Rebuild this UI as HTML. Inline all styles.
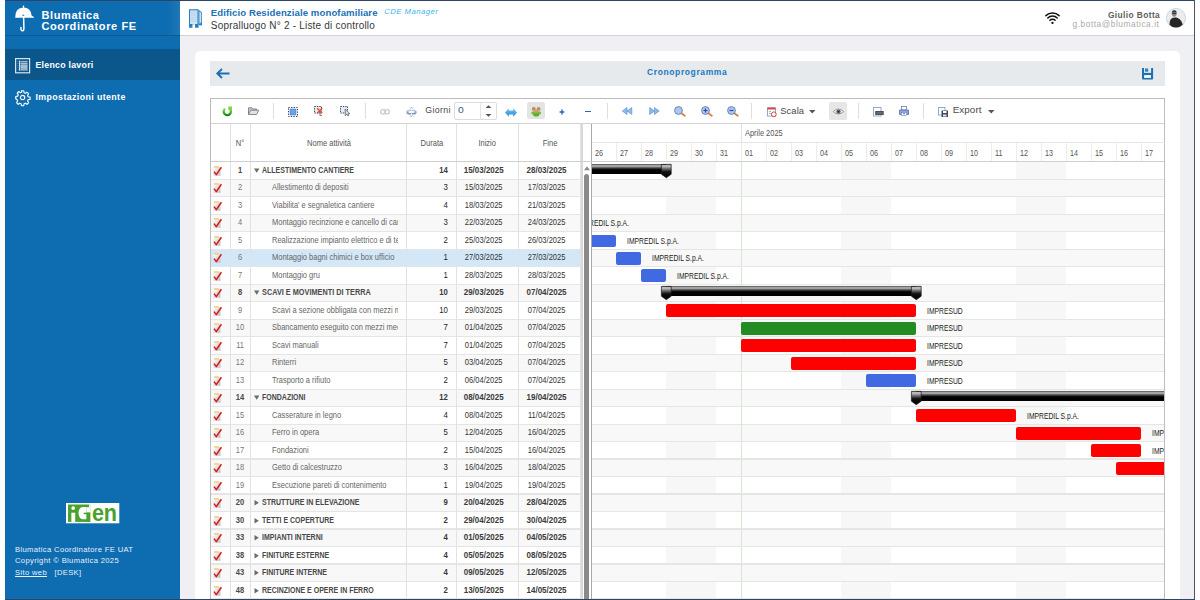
<!DOCTYPE html><html><head><meta charset="utf-8"><style>
*{margin:0;padding:0;box-sizing:border-box}
html,body{width:1200px;height:600px;overflow:hidden;background:#fff;font-family:"Liberation Sans",sans-serif}
.a{position:absolute}
.t{position:absolute;white-space:nowrap;line-height:1}
svg{position:absolute;overflow:visible}
</style></head><body>
<div class="a" style="left:5px;top:0;width:175px;height:600px;background:#0e6db1"></div><div class="a" style="left:168px;top:1px;width:12px;height:34px;background:linear-gradient(90deg,rgba(255,255,255,0),rgba(255,255,255,0.07))"></div>
<div class="a" style="left:5px;top:35px;width:175px;height:1px;background:#0d5b96"></div>
<div class="a" style="left:5px;top:49px;width:175px;height:31px;background:#0b578c"></div>
<svg style="left:14px;top:5px" width="21" height="27" viewBox="0 0 21 27">
<path d="M9.5 0.6 L9.5 3" stroke="#fff" stroke-width="1.3"/>
<path d="M1.2 12.6 Q1.2 2.6 9.5 2.6 Q16.6 2.6 17.6 10.4 L20.2 12.2 Q20.2 12.8 19.5 12.8 L1.2 12.8 Z" fill="#fff"/>
<ellipse cx="9.3" cy="10.3" rx="1.1" ry="0.8" fill="#3f86c0"/>
<path d="M9.6 12.5 L9.9 22.8 Q10 25.8 8.4 25.8 Q6.8 25.8 6.9 22.6" stroke="#fff" stroke-width="1.5" fill="none" stroke-linecap="round"/>
</svg>
<div class="t" style="left:41.5px;top:10.2px;font-size:11px;font-weight:bold;color:#fff;letter-spacing:0.6px">Blumatica</div>
<div class="t" style="left:41.5px;top:21.1px;font-size:11px;font-weight:bold;color:#fff;letter-spacing:0.6px">Coordinatore FE</div>
<svg style="left:14.9px;top:58.3px" width="15.2" height="15.4" viewBox="0 0 15.2 15.4">
<rect x="0.6" y="0.6" width="14" height="14.2" fill="none" stroke="#d6e3ee" stroke-width="1.2"/>
<path d="M4.5 2.6V12.8" stroke="#e8f0f6" stroke-width="0.9"/>
<path d="M3 3V12.5" stroke="#a9c0d4" stroke-width="0.7" stroke-dasharray="0.8 1.2"/>
<rect x="5.4" y="2.9" width="7.2" height="0.9" fill="#c0d2e2"/>
<rect x="5.4" y="4.7" width="7.2" height="1" fill="#f0f5fa"/>
<rect x="5.4" y="6.3" width="7.2" height="4.6" fill="#a6bdd1"/>
<rect x="5.4" y="11.4" width="7.2" height="1" fill="#f0f5fa"/>
</svg>
<div class="t" style="left:35.5px;top:61.3px;font-size:8.8px;font-weight:bold;color:#fff;letter-spacing:0.25px">Elenco lavori</div>
<svg style="left:15px;top:90.2px" width="15.2" height="15.2" viewBox="0 0 16 16">
<path d="M6.8 0.8h2.4l0.4 2.1 1.3 0.6 1.8-1.2 1.7 1.7-1.2 1.8 0.6 1.3 2.1 0.4v2.4l-2.1 0.4-0.6 1.3 1.2 1.8-1.7 1.7-1.8-1.2-1.3 0.6-0.4 2.1H6.8l-0.4-2.1-1.3-0.6-1.8 1.2-1.7-1.7 1.2-1.8-0.6-1.3L0.8 9.2V6.8l2.1-0.4 0.6-1.3-1.2-1.8 1.7-1.7 1.8 1.2 1.3-0.6z" fill="none" stroke="#fff" stroke-width="1.2" stroke-linejoin="round"/>
<circle cx="8" cy="8" r="2.3" fill="none" stroke="#fff" stroke-width="1.2"/>
</svg>
<div class="t" style="left:35.5px;top:92.5px;font-size:8.8px;font-weight:bold;color:#fff;letter-spacing:0.4px">Impostazioni utente</div>
<svg style="left:65.7px;top:502.9px" width="53.3" height="20.3" viewBox="0 0 53.3 20.3">
<rect x="0" y="0" width="53.3" height="20.3" fill="#fff"/>
<rect x="2.05" y="1.5" width="22.15" height="17.4" fill="#4ba12d"/>
<rect x="23.1" y="1.4" width="1.2" height="2.8" fill="#fff"/>
<rect x="20.6" y="4.2" width="3.7" height="5.5" fill="#fff"/>
<path d="M20.6 3.9H16.5A4 6.2 0 0 0 16.5 16.3H20.6Z" fill="#fff"/>
<rect x="17.6" y="9.7" width="6.6" height="1.5" fill="#4ba12d"/>
<rect x="20.6" y="9.7" width="3.6" height="9.2" fill="#4ba12d"/>
<circle cx="7.2" cy="5.15" r="1.8" fill="#fff"/>
<rect x="5.35" y="9.7" width="3.85" height="9.2" fill="#fff"/>
</svg>
<div class="t" style="left:91.6px;top:500.6px;font-size:24px;font-weight:bold;color:#4ba12d;transform:scaleX(0.9);transform-origin:0 0;letter-spacing:-0.3px">en</div>
<div class="t" style="left:15px;top:546.1px;font-size:7.6px;color:#e8f0f8;letter-spacing:0.36px">Blumatica Coordinatore FE UAT</div>
<div class="t" style="left:15px;top:557.3px;font-size:7.6px;color:#e8f0f8;letter-spacing:0.36px">Copyright © Blumatica 2025</div>
<div class="t" style="left:15px;top:568.7px;font-size:7.6px;color:#e8f0f8;letter-spacing:0.36px"><span style="text-decoration:underline">Sito web</span>&nbsp;&nbsp; [DESK]</div>
<div class="a" style="left:180px;top:0;width:1014px;height:35px;background:#fff"></div>
<div class="a" style="left:180px;top:35px;width:1014px;height:1px;background:#d2d2d6"></div>
<div class="a" style="left:180px;top:36px;width:1014px;height:564px;background:#efeff4"></div>
<svg style="left:189px;top:9px" width="13" height="19" viewBox="0 0 13 19">
<path d="M0 0.2H9.6V18.7H6V15.2H3.5V18.7H0Z" fill="#2a7fc1"/>
<rect x="1.1" y="1.4" width="7.3" height="13.6" fill="#e3eff8"/>
<path d="M1.1 3.2H8.4M1.1 5H8.4M1.1 6.8H8.4M1.1 8.6H8.4M1.1 10.4H8.4M1.1 12.2H8.4M3.1 1.4V15M5.1 1.4V15M7 1.4V15" stroke="#9cc4e4" stroke-width="0.5"/>
<path d="M9.6 0.8L12.8 3.2V16.2H9.6Z" fill="#2a7fc1"/>
<path d="M10.4 2.4L12 3.7V14.5H10.4Z" fill="#cfe3f3"/>
<rect x="11.4" y="13.6" width="1.6" height="2.6" fill="#2a7fc1"/>
</svg>
<div class="t" style="left:210.8px;top:8px;font-size:9.6px;font-weight:bold;color:#2171b5;letter-spacing:0.09px">Edificio Residenziale monofamiliare</div>
<div class="t" style="left:384.2px;top:7.8px;font-size:7.7px;font-style:italic;color:#3bb4ea;letter-spacing:0.5px">CDE Manager</div>
<div class="t" style="left:210.8px;top:21.4px;font-size:10px;color:#383838;letter-spacing:0.2px">Sopralluogo N° 2 - Liste di controllo</div>
<svg style="left:1044.9px;top:11.4px" width="15" height="13" viewBox="0 0 15 13">
<path d="M0.9 4.6A9.4 9.4 0 0 1 14.1 4.6" stroke="#111" stroke-width="1.5" fill="none" stroke-linecap="round"/>
<path d="M2.8 7A6.4 6.4 0 0 1 12.2 7" stroke="#111" stroke-width="1.5" fill="none" stroke-linecap="round"/>
<path d="M4.9 9.3A3.5 3.5 0 0 1 10.1 9.3" stroke="#111" stroke-width="1.5" fill="none" stroke-linecap="round"/>
<circle cx="7.5" cy="11.9" r="1.15" fill="#111"/>
</svg>
<div class="t" style="left:1107.9px;top:11.3px;font-size:8.4px;font-weight:bold;color:#5e5e5e;letter-spacing:0.4px">Giulio Botta</div>
<div class="t" style="left:1072.5px;top:20.3px;font-size:8.4px;color:#ababab;letter-spacing:0.52px">g.botta@blumatica.it</div>
<svg style="left:1166.1px;top:8.2px" width="20" height="20" viewBox="0 0 20 20">
<defs><clipPath id="cc"><circle cx="10" cy="10" r="9.4"/></clipPath></defs>
<circle cx="10" cy="10" r="9.6" fill="#ececec" stroke="#b5cfe3" stroke-width="0.7"/>
<g clip-path="url(#cc)">
<path d="M3.3 20 L3.8 13.5 Q4.5 10.3 8.2 9.6 L10.5 9.6 Q14 10.5 15.5 13.5 L17.5 18.5 L17 20Z" fill="#262626"/>
<path d="M2 20 Q10 22 18.5 17.5 L18.5 21 L2 21Z" fill="#1a4a80"/>
<ellipse cx="8.2" cy="5.6" rx="2.5" ry="3.1" fill="#8a8a8a"/>
<path d="M5.8 4.6 Q6 2.2 8.2 2.3 Q10.6 2.3 10.7 4.6 L10.2 4.2 L6.3 4.2Z" fill="#3a3a3a"/>
<rect x="6.3" y="4.9" width="3.9" height="1" fill="#2a2a2a"/>
</g>
</svg>
<div class="a" style="left:195px;top:51px;width:985px;height:560px;background:#fff;border-radius:5px"></div>
<div class="a" style="left:210px;top:61px;width:955px;height:24.5px;background:#e6eaed"></div>
<svg style="left:215.5px;top:67.5px" width="14" height="11" viewBox="0 0 14 11">
<path d="M13.5 5.5H1.8M6 1L1.3 5.5 6 10" stroke="#1f6fb2" stroke-width="1.9" fill="none" stroke-linejoin="miter"/>
</svg>
<div class="t" style="left:647.1px;top:67.8px;font-size:8.5px;font-weight:bold;color:#2078c0;letter-spacing:0.6px">Cronoprogramma</div>
<svg style="left:1141.9px;top:68.1px" width="11.1" height="11.6" viewBox="0 0 11.1 11.6">
<path d="M0 0H11.1V10.8Q11.1 11.6 10.3 11.6H0.8Q0 11.6 0 10.8Z" fill="#1f6fb2"/>
<rect x="2" y="0" width="7.1" height="4.9" fill="#e6eaed"/><rect x="3" y="0.5" width="3.2" height="3.2" fill="#2f7fc0"/>
<rect x="2.1" y="7.1" width="6.9" height="2.8" fill="#fff"/>
</svg>
<div class="a" style="left:210px;top:98.3px;width:955px;height:501.7px;background:#fff;border:1.4px solid #bcbcbc;border-bottom:none"></div>
<div class="a" style="left:211px;top:122.6px;width:953px;height:1.5px;background:#d2d2d2"></div>
<div class="a" style="left:272.8px;top:103px;width:1px;height:16px;background:#dedede"></div>
<div class="a" style="left:364.5px;top:103px;width:1px;height:16px;background:#dedede"></div>
<div class="a" style="left:607.0px;top:103px;width:1px;height:16px;background:#dedede"></div>
<div class="a" style="left:751.2px;top:103px;width:1px;height:16px;background:#dedede"></div>
<div class="a" style="left:857.8px;top:103px;width:1px;height:16px;background:#dedede"></div>
<div class="a" style="left:923.0px;top:103px;width:1px;height:16px;background:#dedede"></div>
<svg style="left:222px;top:105.5px" width="11" height="11" viewBox="0 0 11 11">
<defs><linearGradient id="gg" x1="0" y1="0" x2="0" y2="1"><stop offset="0" stop-color="#8fe060"/><stop offset="1" stop-color="#108a10"/></linearGradient></defs>
<path d="M3.2 2.6 A3.6 3.6 0 1 0 7.6 2.8" stroke="url(#gg)" stroke-width="2.3" fill="none"/>
<path d="M6.2 0.5H10V4.3L8.9 4.1H6.4Z" fill="#7ad84e"/>
</svg>
<svg style="left:248px;top:106.5px" width="11" height="8" viewBox="0 0 11 8">
<path d="M0.5 7.5V0.8H4L5 2H8.5V3.2" fill="#c9ccd2" stroke="#6e7278" stroke-width="0.8"/>
<path d="M0.5 7.5L2.6 3.2H10.7L8.6 7.5Z" fill="#dfe2e8" stroke="#6e7278" stroke-width="0.8"/>
</svg>
<svg style="left:288px;top:106.5px" width="10" height="10" viewBox="0 0 10 10">
<rect x="0.5" y="0.5" width="9" height="9" fill="none" stroke="#3b3f4a" stroke-width="1" stroke-dasharray="1.3 1.3"/>
<rect x="2" y="2" width="6" height="6" fill="#6aa3e8" stroke="#3f7fd0" stroke-width="0.6"/>
</svg>
<svg style="left:314px;top:106px" width="10" height="10" viewBox="0 0 10 10">
<rect x="0.5" y="0.5" width="7" height="6.5" fill="#e6ebf5" stroke="#3b3f4a" stroke-width="1" stroke-dasharray="1.3 1.1"/>
<path d="M3.2 2.2L8.2 7.2M8.2 2.2L3.2 7.2" stroke="#e05030" stroke-width="1.5"/>
<path d="M6 6L6 9.8 7 9 8 10" stroke="#555" stroke-width="0.7" fill="none"/>
</svg>
<svg style="left:340px;top:106px" width="11" height="10" viewBox="0 0 11 10">
<rect x="0.5" y="0.5" width="7" height="6.5" fill="#e6ebf5" stroke="#3b3f4a" stroke-width="1" stroke-dasharray="1.3 1.1"/>
<path d="M5.2 3L5.2 9.6 6.8 8.2 8 10 8.8 9.6 7.8 7.8 9.8 7.6Z" fill="#d8e6f0" stroke="#4a4f58" stroke-width="0.7"/>
</svg>
<svg style="left:380px;top:108.5px" width="10" height="5.5" viewBox="0 0 10 5.5">
<ellipse cx="3" cy="2.75" rx="2.5" ry="2.2" fill="none" stroke="#c6cfdc" stroke-width="1.3"/>
<ellipse cx="7" cy="2.75" rx="2.5" ry="2.2" fill="none" stroke="#c6cfdc" stroke-width="1.3"/>
</svg>
<svg style="left:406px;top:106.5px" width="11" height="10" viewBox="0 0 11 10">
<defs><linearGradient id="ul" x1="0" y1="0" x2="0" y2="1"><stop offset="0" stop-color="#c8d6ea"/><stop offset="1" stop-color="#6f87b0"/></linearGradient></defs>
<path d="M4.8 2.4 Q0.3 2.2 0.3 5 Q0.3 7.8 4.8 7.6 L5.6 5.8 Q2.4 6.4 2.4 5 Q2.4 3.6 5.6 4.2Z" fill="url(#ul)"/>
<path d="M6.2 2.4 Q10.7 2.2 10.7 5 Q10.7 7.8 6.2 7.6 L5.4 5.8 Q8.6 6.4 8.6 5 Q8.6 3.6 5.4 4.2Z" fill="url(#ul)"/>
<path d="M3.8 0.3L4.6 1.6M7.2 0.3L6.4 1.6M5.5 0V1.4M3.8 9.7L4.6 8.4M7.2 9.7L6.4 8.4M5.5 10V8.6" stroke="#7f95b8" stroke-width="0.6"/>
</svg>
<div class="t" style="left:425.2px;top:105.6px;font-size:8.8px;color:#4a4a4a;letter-spacing:0.37px">Giorni</div>
<div class="a" style="left:454.4px;top:101.5px;width:43px;height:18.5px;border:1px solid #dcdcdc;border-radius:2px;background:#fff"></div>
<div class="a" style="left:479.6px;top:102px;width:1px;height:17.5px;background:#e4e4e4"></div>
<div class="t" style="left:458.3px;top:106.2px;font-size:8.6px;color:#3d5a8a;transform:scaleX(1.2);transform-origin:0 0">0</div>
<svg style="left:485px;top:105px" width="7" height="12" viewBox="0 0 7 12">
<path d="M0.5 3L3.5 0.3 6.5 3Z M0.5 9L3.5 11.7 6.5 9Z" fill="#555"/></svg>
<svg style="left:505px;top:107.5px" width="12" height="9" viewBox="0 0 12 9">
<defs><linearGradient id="bg2" x1="0" y1="0" x2="0" y2="1"><stop offset="0" stop-color="#7ec8f5"/><stop offset="1" stop-color="#1f86d6"/></linearGradient></defs>
<path d="M0 4.5L3.8 0.3V2.6H8.2V0.3L12 4.5 8.2 8.7V6.4H3.8V8.7Z" fill="url(#bg2)"/></svg>
<div class="a" style="left:527px;top:102.2px;width:17.7px;height:17.3px;background:#e4e4e4;border-radius:2px"></div>
<svg style="left:530.5px;top:106.5px" width="11" height="10" viewBox="0 0 11 10">
<ellipse cx="2.7" cy="5.9" rx="2.5" ry="1.6" fill="#74c03c"/><ellipse cx="7.7" cy="5.9" rx="2.5" ry="1.6" fill="#74c03c"/>
<circle cx="2.8" cy="1.9" r="1.9" fill="#c48a58"/><circle cx="7.6" cy="1.9" r="1.9" fill="#c48a58"/>
<ellipse cx="5.2" cy="7.8" rx="3.1" ry="1.8" fill="#5fae2e"/>
<circle cx="5.2" cy="4.3" r="1.8" fill="#d49a68"/>
</svg>
<svg style="left:559px;top:109px" width="6" height="6" viewBox="0 0 6 6">
<path d="M3 0.6V5.4M0.6 3H5.4" stroke="#2f5fc8" stroke-width="1.4"/></svg>
<div class="a" style="left:585.3px;top:110.7px;width:6px;height:1.6px;background:#2f5fc8"></div>
<svg style="left:622px;top:107px" width="10.5" height="8" viewBox="0 0 10.5 8">
<path d="M0.3 4L5 0.5V7.5Z M5 4L9.8 0.5V7.5Z" fill="#8dbbea" stroke="#4f8ad4" stroke-width="0.6"/></svg>
<svg style="left:648.5px;top:107px" width="10.5" height="8" viewBox="0 0 10.5 8">
<path d="M10.2 4L5.5 0.5V7.5Z M5.5 4L0.7 0.5V7.5Z" fill="#8dbbea" stroke="#4f8ad4" stroke-width="0.6"/></svg>
<svg style="left:674px;top:105.8px" width="12" height="10" viewBox="0 0 12 10">
<path d="M7 7L10.8 9.8" stroke="#d9813d" stroke-width="1.8" stroke-linecap="round"/>
<circle cx="4.5" cy="4.5" r="3.9" fill="#a9c7ef" stroke="#6c87b5" stroke-width="1"/></svg>
<svg style="left:701px;top:105.8px" width="12" height="10" viewBox="0 0 12 10">
<path d="M7 7L10.8 9.8" stroke="#d9813d" stroke-width="1.8" stroke-linecap="round"/>
<circle cx="4.5" cy="4.5" r="3.9" fill="#a9c7ef" stroke="#6c87b5" stroke-width="1"/><path d="M4.5 2.5V6.5M2.5 4.5H6.5" stroke="#2a4f9a" stroke-width="1.2"/></svg>
<svg style="left:727px;top:105.8px" width="12" height="10" viewBox="0 0 12 10">
<path d="M7 7L10.8 9.8" stroke="#d9813d" stroke-width="1.8" stroke-linecap="round"/>
<circle cx="4.5" cy="4.5" r="3.9" fill="#a9c7ef" stroke="#6c87b5" stroke-width="1"/><path d="M2.5 4.5H6.5" stroke="#2a4f9a" stroke-width="1.2"/></svg>
<svg style="left:766.5px;top:106.5px" width="10" height="10" viewBox="0 0 10 10">
<rect x="0.5" y="1" width="8" height="8" fill="#fff" stroke="#7aa0d8" stroke-width="0.9"/>
<rect x="0.5" y="0.5" width="8" height="2" fill="#d44a3a"/>
<circle cx="6.8" cy="7.3" r="2.4" fill="#fff" stroke="#c33" stroke-width="0.9"/>
<path d="M2 4.5H4M2 6.5H4" stroke="#7aa0d8" stroke-width="0.8"/></svg>
<div class="t" style="left:780.2px;top:105.9px;font-size:9.4px;color:#4a4a4a;letter-spacing:0.1px">Scala</div>
<svg style="left:809px;top:110px" width="6.5" height="4" viewBox="0 0 6.5 4"><path d="M0 0H6.5L3.25 3.6Z" fill="#555"/></svg>
<div class="a" style="left:829.2px;top:102px;width:18.3px;height:18px;background:#e6e6e6;border-radius:2px"></div>
<svg style="left:833px;top:107.5px" width="11" height="7" viewBox="0 0 11 7">
<path d="M0.3 3.5Q5.5 -1.5 10.7 3.5Q5.5 8.5 0.3 3.5Z" fill="#eef2f8" stroke="#b08050" stroke-width="0.8"/>
<circle cx="5.5" cy="3.6" r="2.2" fill="#4a6aa0"/><circle cx="5.5" cy="3.6" r="0.9" fill="#1a2a50"/></svg>
<svg style="left:873px;top:106.5px" width="11" height="9.5" viewBox="0 0 11 9.5">
<rect x="0.5" y="0.5" width="7.5" height="8.5" fill="#fff" stroke="#8aa0d0" stroke-width="0.9"/>
<rect x="2.2" y="4" width="8.5" height="4" fill="#4a4f58"/><path d="M3.5 6H9.5" stroke="#aaa" stroke-width="0.6"/></svg>
<svg style="left:899px;top:106px" width="10" height="10" viewBox="0 0 10 10">
<rect x="2.5" y="0.5" width="5" height="3.5" fill="#fff" stroke="#6a80b0" stroke-width="0.8"/>
<path d="M0.5 4H9.5V8.5H0.5Z" fill="#8aa4d8" stroke="#5a70a0" stroke-width="0.8"/>
<rect x="2.5" y="6.5" width="5" height="3" fill="#fff" stroke="#6a80b0" stroke-width="0.6"/>
<rect x="4" y="7.2" width="2" height="1" fill="#2a8ae0"/></svg>
<svg style="left:937.5px;top:106.5px" width="11" height="10" viewBox="0 0 11 10">
<rect x="0.5" y="0.5" width="6.5" height="7.5" fill="#fff" stroke="#8aa0d0" stroke-width="0.9"/>
<rect x="3.5" y="3.5" width="6.5" height="6.5" fill="#3f4a5e"/><rect x="5" y="4" width="3.5" height="2" fill="#fff"/><rect x="5" y="7.5" width="3.5" height="2" fill="#dfe6f0"/></svg>
<div class="t" style="left:952.7px;top:105.2px;font-size:9.8px;color:#4a4a4a;letter-spacing:0.1px">Export</div>
<svg style="left:987.5px;top:110px" width="6.5" height="4" viewBox="0 0 6.5 4"><path d="M0 0H6.5L3.25 3.6Z" fill="#555"/></svg>
<div class="a" style="left:211px;top:161px;width:953px;height:1.3px;background:#cfcfcf"></div>
<div class="t" style="left:230.4px;width:20.099999999999994px;top:139.5px;text-align:center;font-size:8.2px;color:#555;transform:scaleX(0.92);transform-origin:50% 0">N°</div>
<div class="t" style="left:250.5px;width:156.0px;top:139.5px;text-align:center;font-size:8.2px;color:#555;transform:scaleX(0.92);transform-origin:50% 0">Nome attività</div>
<div class="t" style="left:406.5px;width:49.80000000000001px;top:139.5px;text-align:center;font-size:8.2px;color:#555;transform:scaleX(0.92);transform-origin:50% 0">Durata</div>
<div class="t" style="left:456.3px;width:62.400000000000034px;top:139.5px;text-align:center;font-size:8.2px;color:#555;transform:scaleX(0.92);transform-origin:50% 0">Inizio</div>
<div class="t" style="left:518.7px;width:62.09999999999991px;top:139.5px;text-align:center;font-size:8.2px;color:#555;transform:scaleX(0.92);transform-origin:50% 0">Fine</div>
<div class="a" style="left:591.8px;top:142px;width:572.9000000000001px;height:1px;background:#e6e6e6"></div>
<div class="a" style="left:741.3px;top:123.5px;width:1px;height:38px;background:#e2e2e2"></div>
<div class="t" style="left:745.0999999999999px;top:130.2px;font-size:8.2px;color:#555;transform:scaleX(0.91);transform-origin:0 0">Aprile 2025</div>
<div class="t" style="left:595.3px;top:149.5px;font-size:8.2px;color:#555;transform:scaleX(0.88);transform-origin:0 0">26</div>
<div class="a" style="left:616.3px;top:142.5px;width:1px;height:19px;background:#ececec"></div>
<div class="t" style="left:620.3px;top:149.5px;font-size:8.2px;color:#555;transform:scaleX(0.88);transform-origin:0 0">27</div>
<div class="a" style="left:641.3px;top:142.5px;width:1px;height:19px;background:#ececec"></div>
<div class="t" style="left:645.3px;top:149.5px;font-size:8.2px;color:#555;transform:scaleX(0.88);transform-origin:0 0">28</div>
<div class="a" style="left:666.3px;top:142.5px;width:1px;height:19px;background:#ececec"></div>
<div class="t" style="left:670.3px;top:149.5px;font-size:8.2px;color:#555;transform:scaleX(0.88);transform-origin:0 0">29</div>
<div class="a" style="left:691.3px;top:142.5px;width:1px;height:19px;background:#ececec"></div>
<div class="t" style="left:695.3px;top:149.5px;font-size:8.2px;color:#555;transform:scaleX(0.88);transform-origin:0 0">30</div>
<div class="a" style="left:716.3px;top:142.5px;width:1px;height:19px;background:#ececec"></div>
<div class="t" style="left:720.3px;top:149.5px;font-size:8.2px;color:#555;transform:scaleX(0.88);transform-origin:0 0">31</div>
<div class="a" style="left:741.3px;top:142.5px;width:1px;height:19px;background:#ececec"></div>
<div class="t" style="left:745.3px;top:149.5px;font-size:8.2px;color:#555;transform:scaleX(0.88);transform-origin:0 0">01</div>
<div class="a" style="left:766.3px;top:142.5px;width:1px;height:19px;background:#ececec"></div>
<div class="t" style="left:770.3px;top:149.5px;font-size:8.2px;color:#555;transform:scaleX(0.88);transform-origin:0 0">02</div>
<div class="a" style="left:791.3px;top:142.5px;width:1px;height:19px;background:#ececec"></div>
<div class="t" style="left:795.3px;top:149.5px;font-size:8.2px;color:#555;transform:scaleX(0.88);transform-origin:0 0">03</div>
<div class="a" style="left:816.3px;top:142.5px;width:1px;height:19px;background:#ececec"></div>
<div class="t" style="left:820.3px;top:149.5px;font-size:8.2px;color:#555;transform:scaleX(0.88);transform-origin:0 0">04</div>
<div class="a" style="left:841.3px;top:142.5px;width:1px;height:19px;background:#ececec"></div>
<div class="t" style="left:845.3px;top:149.5px;font-size:8.2px;color:#555;transform:scaleX(0.88);transform-origin:0 0">05</div>
<div class="a" style="left:866.3px;top:142.5px;width:1px;height:19px;background:#ececec"></div>
<div class="t" style="left:870.3px;top:149.5px;font-size:8.2px;color:#555;transform:scaleX(0.88);transform-origin:0 0">06</div>
<div class="a" style="left:891.3px;top:142.5px;width:1px;height:19px;background:#ececec"></div>
<div class="t" style="left:895.3px;top:149.5px;font-size:8.2px;color:#555;transform:scaleX(0.88);transform-origin:0 0">07</div>
<div class="a" style="left:916.3px;top:142.5px;width:1px;height:19px;background:#ececec"></div>
<div class="t" style="left:920.3px;top:149.5px;font-size:8.2px;color:#555;transform:scaleX(0.88);transform-origin:0 0">08</div>
<div class="a" style="left:941.3px;top:142.5px;width:1px;height:19px;background:#ececec"></div>
<div class="t" style="left:945.3px;top:149.5px;font-size:8.2px;color:#555;transform:scaleX(0.88);transform-origin:0 0">09</div>
<div class="a" style="left:966.3px;top:142.5px;width:1px;height:19px;background:#ececec"></div>
<div class="t" style="left:970.3px;top:149.5px;font-size:8.2px;color:#555;transform:scaleX(0.88);transform-origin:0 0">10</div>
<div class="a" style="left:991.3px;top:142.5px;width:1px;height:19px;background:#ececec"></div>
<div class="t" style="left:995.3px;top:149.5px;font-size:8.2px;color:#555;transform:scaleX(0.88);transform-origin:0 0">11</div>
<div class="a" style="left:1016.3px;top:142.5px;width:1px;height:19px;background:#ececec"></div>
<div class="t" style="left:1020.3px;top:149.5px;font-size:8.2px;color:#555;transform:scaleX(0.88);transform-origin:0 0">12</div>
<div class="a" style="left:1041.3px;top:142.5px;width:1px;height:19px;background:#ececec"></div>
<div class="t" style="left:1045.3px;top:149.5px;font-size:8.2px;color:#555;transform:scaleX(0.88);transform-origin:0 0">13</div>
<div class="a" style="left:1066.3px;top:142.5px;width:1px;height:19px;background:#ececec"></div>
<div class="t" style="left:1070.3px;top:149.5px;font-size:8.2px;color:#555;transform:scaleX(0.88);transform-origin:0 0">14</div>
<div class="a" style="left:1091.3px;top:142.5px;width:1px;height:19px;background:#ececec"></div>
<div class="t" style="left:1095.3px;top:149.5px;font-size:8.2px;color:#555;transform:scaleX(0.88);transform-origin:0 0">15</div>
<div class="a" style="left:1116.3px;top:142.5px;width:1px;height:19px;background:#ececec"></div>
<div class="t" style="left:1120.3px;top:149.5px;font-size:8.2px;color:#555;transform:scaleX(0.88);transform-origin:0 0">16</div>
<div class="a" style="left:1141.3px;top:142.5px;width:1px;height:19px;background:#ececec"></div>
<div class="t" style="left:1145.3px;top:149.5px;font-size:8.2px;color:#555;transform:scaleX(0.88);transform-origin:0 0">17</div>
<div class="a" style="left:211px;top:162.35px;width:369.8px;height:16.89px;background:#fff"></div>
<div class="a" style="left:592.0999999999999px;top:162.35px;width:572.10px;height:16.89px;background:#fff"></div>
<div class="a" style="left:666.3px;top:162.35px;width:50.0px;height:16.89px;background:#f7f7f7"></div>
<div class="a" style="left:841.3px;top:162.35px;width:50.0px;height:16.89px;background:#f7f7f7"></div>
<div class="a" style="left:1016.3px;top:162.35px;width:50.0px;height:16.89px;background:#f7f7f7"></div>
<div class="a" style="left:741.3px;top:161.75px;width:1px;height:17.49px;background:#d5e8d5"></div>
<div class="a" style="left:211px;top:178.64px;width:369.8px;height:1.2px;background:#e5e5e5"></div>
<div class="a" style="left:592.0999999999999px;top:178.64px;width:572.10px;height:1.2px;background:#e5e5e5"></div>
<svg style="left:213px;top:165.95px" width="9" height="10" viewBox="0 0 9 10">
<defs><linearGradient id="pp0" x1="0" y1="0" x2="1" y2="1"><stop offset="0" stop-color="#fff"/><stop offset="1" stop-color="#bdbdbd"/></linearGradient></defs>
<rect x="0.3" y="1" width="7.2" height="8.8" fill="url(#pp0)"/>
<rect x="1" y="0.2" width="5" height="1.5" fill="#f0d070"/>
<path d="M1 5.6L3.3 8.6 8.4 1.2" stroke="#d81818" stroke-width="1.5" fill="none" stroke-linejoin="round"/>
</svg>
<div class="t" style="left:230.40px;width:20.10px;top:166.75px;text-align:center;font-size:8.2px;font-weight:bold;color:#4a4a4a;letter-spacing:0px;transform:scaleX(0.92);transform-origin:50% 0;">1</div>
<svg style="left:254px;top:168.05px" width="6" height="6" viewBox="0 0 6 6"><path d="M0 0.5H5.4L2.7 4.8Z" fill="#6a6a6a"/></svg>
<div class="t" style="left:261.80px;top:166.75px;font-size:8.2px;font-weight:bold;color:#4a4a4a;letter-spacing:0px;transform:scaleX(0.855);transform-origin:0 0;">ALLESTIMENTO CANTIERE</div>
<div class="t" style="left:406.50px;width:40.80px;top:166.75px;text-align:right;font-size:8.2px;font-weight:bold;color:#3a3a3a;letter-spacing:0px;transform:scaleX(0.95);transform-origin:100% 0;">14</div>
<div class="t" style="left:456.30px;width:55.40px;top:166.75px;text-align:center;font-size:8.2px;font-weight:bold;color:#3a3a3a;letter-spacing:0px;transform:scaleX(0.976);transform-origin:50% 0;">15/03/2025</div>
<div class="t" style="left:518.70px;width:55.10px;top:166.75px;text-align:center;font-size:8.2px;font-weight:bold;color:#3a3a3a;letter-spacing:0px;transform:scaleX(0.976);transform-origin:50% 0;">28/03/2025</div>
<div class="a" style="left:211px;top:179.84px;width:369.8px;height:16.89px;background:#f8f8f8"></div>
<div class="a" style="left:592.0999999999999px;top:179.84px;width:572.10px;height:16.89px;background:#f8f8f8"></div>
<div class="a" style="left:666.3px;top:179.84px;width:50.0px;height:16.89px;background:#f8f8f8"></div>
<div class="a" style="left:841.3px;top:179.84px;width:50.0px;height:16.89px;background:#f8f8f8"></div>
<div class="a" style="left:1016.3px;top:179.84px;width:50.0px;height:16.89px;background:#f8f8f8"></div>
<div class="a" style="left:741.3px;top:179.24px;width:1px;height:17.49px;background:#d5e8d5"></div>
<div class="a" style="left:211px;top:196.13px;width:369.8px;height:1.2px;background:#e5e5e5"></div>
<div class="a" style="left:592.0999999999999px;top:196.13px;width:572.10px;height:1.2px;background:#e5e5e5"></div>
<svg style="left:213px;top:183.44px" width="9" height="10" viewBox="0 0 9 10">
<defs><linearGradient id="pp1" x1="0" y1="0" x2="1" y2="1"><stop offset="0" stop-color="#fff"/><stop offset="1" stop-color="#bdbdbd"/></linearGradient></defs>
<rect x="0.3" y="1" width="7.2" height="8.8" fill="url(#pp1)"/>
<rect x="1" y="0.2" width="5" height="1.5" fill="#f0d070"/>
<path d="M1 5.6L3.3 8.6 8.4 1.2" stroke="#d81818" stroke-width="1.5" fill="none" stroke-linejoin="round"/>
</svg>
<div class="t" style="left:230.40px;width:20.10px;top:184.24px;text-align:center;font-size:8.2px;font-weight:normal;color:#777;letter-spacing:0px;transform:scaleX(0.92);transform-origin:50% 0;">2</div>
<div style="position:absolute;left:271.6px;top:179.24px;width:126.8px;height:17.49px;overflow:hidden"><div class="t" style="left:0.00px;top:5.00px;font-size:8.2px;font-weight:normal;color:#666;letter-spacing:0px;transform:scaleX(0.915);transform-origin:0 0;">Allestimento di depositi</div></div>
<div class="t" style="left:406.50px;width:40.80px;top:184.24px;text-align:right;font-size:8.2px;font-weight:normal;color:#222;letter-spacing:0px;transform:scaleX(0.95);transform-origin:100% 0;">3</div>
<div class="t" style="left:456.30px;width:55.40px;top:184.24px;text-align:center;font-size:8.2px;font-weight:normal;color:#333;letter-spacing:0px;transform:scaleX(0.92);transform-origin:50% 0;">15/03/2025</div>
<div class="t" style="left:518.70px;width:55.10px;top:184.24px;text-align:center;font-size:8.2px;font-weight:normal;color:#333;letter-spacing:0px;transform:scaleX(0.92);transform-origin:50% 0;">17/03/2025</div>
<div class="a" style="left:211px;top:197.33px;width:369.8px;height:16.89px;background:#fff"></div>
<div class="a" style="left:592.0999999999999px;top:197.33px;width:572.10px;height:16.89px;background:#fff"></div>
<div class="a" style="left:666.3px;top:197.33px;width:50.0px;height:16.89px;background:#f7f7f7"></div>
<div class="a" style="left:841.3px;top:197.33px;width:50.0px;height:16.89px;background:#f7f7f7"></div>
<div class="a" style="left:1016.3px;top:197.33px;width:50.0px;height:16.89px;background:#f7f7f7"></div>
<div class="a" style="left:741.3px;top:196.73px;width:1px;height:17.49px;background:#d5e8d5"></div>
<div class="a" style="left:211px;top:213.62px;width:369.8px;height:1.2px;background:#e5e5e5"></div>
<div class="a" style="left:592.0999999999999px;top:213.62px;width:572.10px;height:1.2px;background:#e5e5e5"></div>
<svg style="left:213px;top:200.93px" width="9" height="10" viewBox="0 0 9 10">
<defs><linearGradient id="pp2" x1="0" y1="0" x2="1" y2="1"><stop offset="0" stop-color="#fff"/><stop offset="1" stop-color="#bdbdbd"/></linearGradient></defs>
<rect x="0.3" y="1" width="7.2" height="8.8" fill="url(#pp2)"/>
<rect x="1" y="0.2" width="5" height="1.5" fill="#f0d070"/>
<path d="M1 5.6L3.3 8.6 8.4 1.2" stroke="#d81818" stroke-width="1.5" fill="none" stroke-linejoin="round"/>
</svg>
<div class="t" style="left:230.40px;width:20.10px;top:201.73px;text-align:center;font-size:8.2px;font-weight:normal;color:#777;letter-spacing:0px;transform:scaleX(0.92);transform-origin:50% 0;">3</div>
<div style="position:absolute;left:271.6px;top:196.73px;width:126.8px;height:17.49px;overflow:hidden"><div class="t" style="left:0.00px;top:5.00px;font-size:8.2px;font-weight:normal;color:#666;letter-spacing:0px;transform:scaleX(0.915);transform-origin:0 0;">Viabilita' e segnaletica cantiere</div></div>
<div class="t" style="left:406.50px;width:40.80px;top:201.73px;text-align:right;font-size:8.2px;font-weight:normal;color:#222;letter-spacing:0px;transform:scaleX(0.95);transform-origin:100% 0;">4</div>
<div class="t" style="left:456.30px;width:55.40px;top:201.73px;text-align:center;font-size:8.2px;font-weight:normal;color:#333;letter-spacing:0px;transform:scaleX(0.92);transform-origin:50% 0;">18/03/2025</div>
<div class="t" style="left:518.70px;width:55.10px;top:201.73px;text-align:center;font-size:8.2px;font-weight:normal;color:#333;letter-spacing:0px;transform:scaleX(0.92);transform-origin:50% 0;">21/03/2025</div>
<div class="a" style="left:211px;top:214.82px;width:369.8px;height:16.89px;background:#f8f8f8"></div>
<div class="a" style="left:592.0999999999999px;top:214.82px;width:572.10px;height:16.89px;background:#f8f8f8"></div>
<div class="a" style="left:666.3px;top:214.82px;width:50.0px;height:16.89px;background:#f8f8f8"></div>
<div class="a" style="left:841.3px;top:214.82px;width:50.0px;height:16.89px;background:#f8f8f8"></div>
<div class="a" style="left:1016.3px;top:214.82px;width:50.0px;height:16.89px;background:#f8f8f8"></div>
<div class="a" style="left:741.3px;top:214.22px;width:1px;height:17.49px;background:#d5e8d5"></div>
<div class="a" style="left:211px;top:231.11px;width:369.8px;height:1.2px;background:#e5e5e5"></div>
<div class="a" style="left:592.0999999999999px;top:231.11px;width:572.10px;height:1.2px;background:#e5e5e5"></div>
<svg style="left:213px;top:218.42px" width="9" height="10" viewBox="0 0 9 10">
<defs><linearGradient id="pp3" x1="0" y1="0" x2="1" y2="1"><stop offset="0" stop-color="#fff"/><stop offset="1" stop-color="#bdbdbd"/></linearGradient></defs>
<rect x="0.3" y="1" width="7.2" height="8.8" fill="url(#pp3)"/>
<rect x="1" y="0.2" width="5" height="1.5" fill="#f0d070"/>
<path d="M1 5.6L3.3 8.6 8.4 1.2" stroke="#d81818" stroke-width="1.5" fill="none" stroke-linejoin="round"/>
</svg>
<div class="t" style="left:230.40px;width:20.10px;top:219.22px;text-align:center;font-size:8.2px;font-weight:normal;color:#777;letter-spacing:0px;transform:scaleX(0.92);transform-origin:50% 0;">4</div>
<div style="position:absolute;left:271.6px;top:214.22px;width:126.8px;height:17.49px;overflow:hidden"><div class="t" style="left:0.00px;top:5.00px;font-size:8.2px;font-weight:normal;color:#666;letter-spacing:0px;transform:scaleX(0.915);transform-origin:0 0;">Montaggio recinzione e cancello di cantiere</div></div>
<div class="t" style="left:406.50px;width:40.80px;top:219.22px;text-align:right;font-size:8.2px;font-weight:normal;color:#222;letter-spacing:0px;transform:scaleX(0.95);transform-origin:100% 0;">3</div>
<div class="t" style="left:456.30px;width:55.40px;top:219.22px;text-align:center;font-size:8.2px;font-weight:normal;color:#333;letter-spacing:0px;transform:scaleX(0.92);transform-origin:50% 0;">22/03/2025</div>
<div class="t" style="left:518.70px;width:55.10px;top:219.22px;text-align:center;font-size:8.2px;font-weight:normal;color:#333;letter-spacing:0px;transform:scaleX(0.92);transform-origin:50% 0;">24/03/2025</div>
<div class="a" style="left:211px;top:232.31px;width:369.8px;height:16.89px;background:#fff"></div>
<div class="a" style="left:592.0999999999999px;top:232.31px;width:572.10px;height:16.89px;background:#fff"></div>
<div class="a" style="left:666.3px;top:232.31px;width:50.0px;height:16.89px;background:#f7f7f7"></div>
<div class="a" style="left:841.3px;top:232.31px;width:50.0px;height:16.89px;background:#f7f7f7"></div>
<div class="a" style="left:1016.3px;top:232.31px;width:50.0px;height:16.89px;background:#f7f7f7"></div>
<div class="a" style="left:741.3px;top:231.71px;width:1px;height:17.49px;background:#d5e8d5"></div>
<div class="a" style="left:211px;top:248.60px;width:369.8px;height:1.2px;background:#e5e5e5"></div>
<div class="a" style="left:592.0999999999999px;top:248.60px;width:572.10px;height:1.2px;background:#e5e5e5"></div>
<svg style="left:213px;top:235.91px" width="9" height="10" viewBox="0 0 9 10">
<defs><linearGradient id="pp4" x1="0" y1="0" x2="1" y2="1"><stop offset="0" stop-color="#fff"/><stop offset="1" stop-color="#bdbdbd"/></linearGradient></defs>
<rect x="0.3" y="1" width="7.2" height="8.8" fill="url(#pp4)"/>
<rect x="1" y="0.2" width="5" height="1.5" fill="#f0d070"/>
<path d="M1 5.6L3.3 8.6 8.4 1.2" stroke="#d81818" stroke-width="1.5" fill="none" stroke-linejoin="round"/>
</svg>
<div class="t" style="left:230.40px;width:20.10px;top:236.71px;text-align:center;font-size:8.2px;font-weight:normal;color:#777;letter-spacing:0px;transform:scaleX(0.92);transform-origin:50% 0;">5</div>
<div style="position:absolute;left:271.6px;top:231.71px;width:126.8px;height:17.49px;overflow:hidden"><div class="t" style="left:0.00px;top:5.00px;font-size:8.2px;font-weight:normal;color:#666;letter-spacing:0px;transform:scaleX(0.915);transform-origin:0 0;">Realizzazione impianto elettrico e di terra</div></div>
<div class="t" style="left:406.50px;width:40.80px;top:236.71px;text-align:right;font-size:8.2px;font-weight:normal;color:#222;letter-spacing:0px;transform:scaleX(0.95);transform-origin:100% 0;">2</div>
<div class="t" style="left:456.30px;width:55.40px;top:236.71px;text-align:center;font-size:8.2px;font-weight:normal;color:#333;letter-spacing:0px;transform:scaleX(0.92);transform-origin:50% 0;">25/03/2025</div>
<div class="t" style="left:518.70px;width:55.10px;top:236.71px;text-align:center;font-size:8.2px;font-weight:normal;color:#333;letter-spacing:0px;transform:scaleX(0.92);transform-origin:50% 0;">26/03/2025</div>
<div class="a" style="left:211px;top:249.80px;width:369.8px;height:16.89px;background:#d2e7f8"></div>
<div class="a" style="left:592.0999999999999px;top:249.80px;width:572.10px;height:16.89px;background:#f8f8f8"></div>
<div class="a" style="left:666.3px;top:249.80px;width:50.0px;height:16.89px;background:#f8f8f8"></div>
<div class="a" style="left:841.3px;top:249.80px;width:50.0px;height:16.89px;background:#f8f8f8"></div>
<div class="a" style="left:1016.3px;top:249.80px;width:50.0px;height:16.89px;background:#f8f8f8"></div>
<div class="a" style="left:741.3px;top:249.20px;width:1px;height:17.49px;background:#d5e8d5"></div>
<div class="a" style="left:211px;top:266.09px;width:369.8px;height:1.2px;background:#e5e5e5"></div>
<div class="a" style="left:592.0999999999999px;top:266.09px;width:572.10px;height:1.2px;background:#e5e5e5"></div>
<svg style="left:213px;top:253.40px" width="9" height="10" viewBox="0 0 9 10">
<defs><linearGradient id="pp5" x1="0" y1="0" x2="1" y2="1"><stop offset="0" stop-color="#fff"/><stop offset="1" stop-color="#bdbdbd"/></linearGradient></defs>
<rect x="0.3" y="1" width="7.2" height="8.8" fill="url(#pp5)"/>
<rect x="1" y="0.2" width="5" height="1.5" fill="#f0d070"/>
<path d="M1 5.6L3.3 8.6 8.4 1.2" stroke="#d81818" stroke-width="1.5" fill="none" stroke-linejoin="round"/>
</svg>
<div class="t" style="left:230.40px;width:20.10px;top:254.20px;text-align:center;font-size:8.2px;font-weight:normal;color:#777;letter-spacing:0px;transform:scaleX(0.92);transform-origin:50% 0;">6</div>
<div style="position:absolute;left:271.6px;top:249.20px;width:126.8px;height:17.49px;overflow:hidden"><div class="t" style="left:0.00px;top:5.00px;font-size:8.2px;font-weight:normal;color:#666;letter-spacing:0px;transform:scaleX(0.915);transform-origin:0 0;">Montaggio bagni chimici e box ufficio</div></div>
<div class="t" style="left:406.50px;width:40.80px;top:254.20px;text-align:right;font-size:8.2px;font-weight:normal;color:#222;letter-spacing:0px;transform:scaleX(0.95);transform-origin:100% 0;">1</div>
<div class="t" style="left:456.30px;width:55.40px;top:254.20px;text-align:center;font-size:8.2px;font-weight:normal;color:#333;letter-spacing:0px;transform:scaleX(0.92);transform-origin:50% 0;">27/03/2025</div>
<div class="t" style="left:518.70px;width:55.10px;top:254.20px;text-align:center;font-size:8.2px;font-weight:normal;color:#333;letter-spacing:0px;transform:scaleX(0.92);transform-origin:50% 0;">27/03/2025</div>
<div class="a" style="left:211px;top:267.29px;width:369.8px;height:16.89px;background:#fff"></div>
<div class="a" style="left:592.0999999999999px;top:267.29px;width:572.10px;height:16.89px;background:#fff"></div>
<div class="a" style="left:666.3px;top:267.29px;width:50.0px;height:16.89px;background:#f7f7f7"></div>
<div class="a" style="left:841.3px;top:267.29px;width:50.0px;height:16.89px;background:#f7f7f7"></div>
<div class="a" style="left:1016.3px;top:267.29px;width:50.0px;height:16.89px;background:#f7f7f7"></div>
<div class="a" style="left:741.3px;top:266.69px;width:1px;height:17.49px;background:#d5e8d5"></div>
<div class="a" style="left:211px;top:283.58px;width:369.8px;height:1.2px;background:#e5e5e5"></div>
<div class="a" style="left:592.0999999999999px;top:283.58px;width:572.10px;height:1.2px;background:#e5e5e5"></div>
<svg style="left:213px;top:270.89px" width="9" height="10" viewBox="0 0 9 10">
<defs><linearGradient id="pp6" x1="0" y1="0" x2="1" y2="1"><stop offset="0" stop-color="#fff"/><stop offset="1" stop-color="#bdbdbd"/></linearGradient></defs>
<rect x="0.3" y="1" width="7.2" height="8.8" fill="url(#pp6)"/>
<rect x="1" y="0.2" width="5" height="1.5" fill="#f0d070"/>
<path d="M1 5.6L3.3 8.6 8.4 1.2" stroke="#d81818" stroke-width="1.5" fill="none" stroke-linejoin="round"/>
</svg>
<div class="t" style="left:230.40px;width:20.10px;top:271.69px;text-align:center;font-size:8.2px;font-weight:normal;color:#777;letter-spacing:0px;transform:scaleX(0.92);transform-origin:50% 0;">7</div>
<div style="position:absolute;left:271.6px;top:266.69px;width:126.8px;height:17.49px;overflow:hidden"><div class="t" style="left:0.00px;top:5.00px;font-size:8.2px;font-weight:normal;color:#666;letter-spacing:0px;transform:scaleX(0.915);transform-origin:0 0;">Montaggio gru</div></div>
<div class="t" style="left:406.50px;width:40.80px;top:271.69px;text-align:right;font-size:8.2px;font-weight:normal;color:#222;letter-spacing:0px;transform:scaleX(0.95);transform-origin:100% 0;">1</div>
<div class="t" style="left:456.30px;width:55.40px;top:271.69px;text-align:center;font-size:8.2px;font-weight:normal;color:#333;letter-spacing:0px;transform:scaleX(0.92);transform-origin:50% 0;">28/03/2025</div>
<div class="t" style="left:518.70px;width:55.10px;top:271.69px;text-align:center;font-size:8.2px;font-weight:normal;color:#333;letter-spacing:0px;transform:scaleX(0.92);transform-origin:50% 0;">28/03/2025</div>
<div class="a" style="left:211px;top:284.78px;width:369.8px;height:16.89px;background:#f8f8f8"></div>
<div class="a" style="left:592.0999999999999px;top:284.78px;width:572.10px;height:16.89px;background:#f8f8f8"></div>
<div class="a" style="left:666.3px;top:284.78px;width:50.0px;height:16.89px;background:#f8f8f8"></div>
<div class="a" style="left:841.3px;top:284.78px;width:50.0px;height:16.89px;background:#f8f8f8"></div>
<div class="a" style="left:1016.3px;top:284.78px;width:50.0px;height:16.89px;background:#f8f8f8"></div>
<div class="a" style="left:741.3px;top:284.18px;width:1px;height:17.49px;background:#d5e8d5"></div>
<div class="a" style="left:211px;top:301.07px;width:369.8px;height:1.2px;background:#e5e5e5"></div>
<div class="a" style="left:592.0999999999999px;top:301.07px;width:572.10px;height:1.2px;background:#e5e5e5"></div>
<svg style="left:213px;top:288.38px" width="9" height="10" viewBox="0 0 9 10">
<defs><linearGradient id="pp7" x1="0" y1="0" x2="1" y2="1"><stop offset="0" stop-color="#fff"/><stop offset="1" stop-color="#bdbdbd"/></linearGradient></defs>
<rect x="0.3" y="1" width="7.2" height="8.8" fill="url(#pp7)"/>
<rect x="1" y="0.2" width="5" height="1.5" fill="#f0d070"/>
<path d="M1 5.6L3.3 8.6 8.4 1.2" stroke="#d81818" stroke-width="1.5" fill="none" stroke-linejoin="round"/>
</svg>
<div class="t" style="left:230.40px;width:20.10px;top:289.18px;text-align:center;font-size:8.2px;font-weight:bold;color:#4a4a4a;letter-spacing:0px;transform:scaleX(0.92);transform-origin:50% 0;">8</div>
<svg style="left:254px;top:290.48px" width="6" height="6" viewBox="0 0 6 6"><path d="M0 0.5H5.4L2.7 4.8Z" fill="#6a6a6a"/></svg>
<div class="t" style="left:261.80px;top:289.18px;font-size:8.2px;font-weight:bold;color:#4a4a4a;letter-spacing:0px;transform:scaleX(0.893);transform-origin:0 0;">SCAVI E MOVIMENTI DI TERRA</div>
<div class="t" style="left:406.50px;width:40.80px;top:289.18px;text-align:right;font-size:8.2px;font-weight:bold;color:#3a3a3a;letter-spacing:0px;transform:scaleX(0.95);transform-origin:100% 0;">10</div>
<div class="t" style="left:456.30px;width:55.40px;top:289.18px;text-align:center;font-size:8.2px;font-weight:bold;color:#3a3a3a;letter-spacing:0px;transform:scaleX(0.976);transform-origin:50% 0;">29/03/2025</div>
<div class="t" style="left:518.70px;width:55.10px;top:289.18px;text-align:center;font-size:8.2px;font-weight:bold;color:#3a3a3a;letter-spacing:0px;transform:scaleX(0.976);transform-origin:50% 0;">07/04/2025</div>
<div class="a" style="left:211px;top:302.27px;width:369.8px;height:16.89px;background:#fff"></div>
<div class="a" style="left:592.0999999999999px;top:302.27px;width:572.10px;height:16.89px;background:#fff"></div>
<div class="a" style="left:666.3px;top:302.27px;width:50.0px;height:16.89px;background:#f7f7f7"></div>
<div class="a" style="left:841.3px;top:302.27px;width:50.0px;height:16.89px;background:#f7f7f7"></div>
<div class="a" style="left:1016.3px;top:302.27px;width:50.0px;height:16.89px;background:#f7f7f7"></div>
<div class="a" style="left:741.3px;top:301.67px;width:1px;height:17.49px;background:#d5e8d5"></div>
<div class="a" style="left:211px;top:318.56px;width:369.8px;height:1.2px;background:#e5e5e5"></div>
<div class="a" style="left:592.0999999999999px;top:318.56px;width:572.10px;height:1.2px;background:#e5e5e5"></div>
<svg style="left:213px;top:305.87px" width="9" height="10" viewBox="0 0 9 10">
<defs><linearGradient id="pp8" x1="0" y1="0" x2="1" y2="1"><stop offset="0" stop-color="#fff"/><stop offset="1" stop-color="#bdbdbd"/></linearGradient></defs>
<rect x="0.3" y="1" width="7.2" height="8.8" fill="url(#pp8)"/>
<rect x="1" y="0.2" width="5" height="1.5" fill="#f0d070"/>
<path d="M1 5.6L3.3 8.6 8.4 1.2" stroke="#d81818" stroke-width="1.5" fill="none" stroke-linejoin="round"/>
</svg>
<div class="t" style="left:230.40px;width:20.10px;top:306.67px;text-align:center;font-size:8.2px;font-weight:normal;color:#777;letter-spacing:0px;transform:scaleX(0.92);transform-origin:50% 0;">9</div>
<div style="position:absolute;left:271.6px;top:301.67px;width:126.8px;height:17.49px;overflow:hidden"><div class="t" style="left:0.00px;top:5.00px;font-size:8.2px;font-weight:normal;color:#666;letter-spacing:0px;transform:scaleX(0.915);transform-origin:0 0;">Scavi a sezione obbligata con mezzi meccanici</div></div>
<div class="t" style="left:406.50px;width:40.80px;top:306.67px;text-align:right;font-size:8.2px;font-weight:normal;color:#222;letter-spacing:0px;transform:scaleX(0.95);transform-origin:100% 0;">10</div>
<div class="t" style="left:456.30px;width:55.40px;top:306.67px;text-align:center;font-size:8.2px;font-weight:normal;color:#333;letter-spacing:0px;transform:scaleX(0.92);transform-origin:50% 0;">29/03/2025</div>
<div class="t" style="left:518.70px;width:55.10px;top:306.67px;text-align:center;font-size:8.2px;font-weight:normal;color:#333;letter-spacing:0px;transform:scaleX(0.92);transform-origin:50% 0;">07/04/2025</div>
<div class="a" style="left:211px;top:319.76px;width:369.8px;height:16.89px;background:#f8f8f8"></div>
<div class="a" style="left:592.0999999999999px;top:319.76px;width:572.10px;height:16.89px;background:#f8f8f8"></div>
<div class="a" style="left:666.3px;top:319.76px;width:50.0px;height:16.89px;background:#f8f8f8"></div>
<div class="a" style="left:841.3px;top:319.76px;width:50.0px;height:16.89px;background:#f8f8f8"></div>
<div class="a" style="left:1016.3px;top:319.76px;width:50.0px;height:16.89px;background:#f8f8f8"></div>
<div class="a" style="left:741.3px;top:319.16px;width:1px;height:17.49px;background:#d5e8d5"></div>
<div class="a" style="left:211px;top:336.05px;width:369.8px;height:1.2px;background:#e5e5e5"></div>
<div class="a" style="left:592.0999999999999px;top:336.05px;width:572.10px;height:1.2px;background:#e5e5e5"></div>
<svg style="left:213px;top:323.36px" width="9" height="10" viewBox="0 0 9 10">
<defs><linearGradient id="pp9" x1="0" y1="0" x2="1" y2="1"><stop offset="0" stop-color="#fff"/><stop offset="1" stop-color="#bdbdbd"/></linearGradient></defs>
<rect x="0.3" y="1" width="7.2" height="8.8" fill="url(#pp9)"/>
<rect x="1" y="0.2" width="5" height="1.5" fill="#f0d070"/>
<path d="M1 5.6L3.3 8.6 8.4 1.2" stroke="#d81818" stroke-width="1.5" fill="none" stroke-linejoin="round"/>
</svg>
<div class="t" style="left:230.40px;width:20.10px;top:324.16px;text-align:center;font-size:8.2px;font-weight:normal;color:#777;letter-spacing:0px;transform:scaleX(0.92);transform-origin:50% 0;">10</div>
<div style="position:absolute;left:271.6px;top:319.16px;width:126.8px;height:17.49px;overflow:hidden"><div class="t" style="left:0.00px;top:5.00px;font-size:8.2px;font-weight:normal;color:#666;letter-spacing:0px;transform:scaleX(0.915);transform-origin:0 0;">Sbancamento eseguito con mezzi meccanici</div></div>
<div class="t" style="left:406.50px;width:40.80px;top:324.16px;text-align:right;font-size:8.2px;font-weight:normal;color:#222;letter-spacing:0px;transform:scaleX(0.95);transform-origin:100% 0;">7</div>
<div class="t" style="left:456.30px;width:55.40px;top:324.16px;text-align:center;font-size:8.2px;font-weight:normal;color:#333;letter-spacing:0px;transform:scaleX(0.92);transform-origin:50% 0;">01/04/2025</div>
<div class="t" style="left:518.70px;width:55.10px;top:324.16px;text-align:center;font-size:8.2px;font-weight:normal;color:#333;letter-spacing:0px;transform:scaleX(0.92);transform-origin:50% 0;">07/04/2025</div>
<div class="a" style="left:211px;top:337.25px;width:369.8px;height:16.89px;background:#fff"></div>
<div class="a" style="left:592.0999999999999px;top:337.25px;width:572.10px;height:16.89px;background:#fff"></div>
<div class="a" style="left:666.3px;top:337.25px;width:50.0px;height:16.89px;background:#f7f7f7"></div>
<div class="a" style="left:841.3px;top:337.25px;width:50.0px;height:16.89px;background:#f7f7f7"></div>
<div class="a" style="left:1016.3px;top:337.25px;width:50.0px;height:16.89px;background:#f7f7f7"></div>
<div class="a" style="left:741.3px;top:336.65px;width:1px;height:17.49px;background:#d5e8d5"></div>
<div class="a" style="left:211px;top:353.54px;width:369.8px;height:1.2px;background:#e5e5e5"></div>
<div class="a" style="left:592.0999999999999px;top:353.54px;width:572.10px;height:1.2px;background:#e5e5e5"></div>
<svg style="left:213px;top:340.85px" width="9" height="10" viewBox="0 0 9 10">
<defs><linearGradient id="pp10" x1="0" y1="0" x2="1" y2="1"><stop offset="0" stop-color="#fff"/><stop offset="1" stop-color="#bdbdbd"/></linearGradient></defs>
<rect x="0.3" y="1" width="7.2" height="8.8" fill="url(#pp10)"/>
<rect x="1" y="0.2" width="5" height="1.5" fill="#f0d070"/>
<path d="M1 5.6L3.3 8.6 8.4 1.2" stroke="#d81818" stroke-width="1.5" fill="none" stroke-linejoin="round"/>
</svg>
<div class="t" style="left:230.40px;width:20.10px;top:341.65px;text-align:center;font-size:8.2px;font-weight:normal;color:#777;letter-spacing:0px;transform:scaleX(0.92);transform-origin:50% 0;">11</div>
<div style="position:absolute;left:271.6px;top:336.65px;width:126.8px;height:17.49px;overflow:hidden"><div class="t" style="left:0.00px;top:5.00px;font-size:8.2px;font-weight:normal;color:#666;letter-spacing:0px;transform:scaleX(0.915);transform-origin:0 0;">Scavi manuali</div></div>
<div class="t" style="left:406.50px;width:40.80px;top:341.65px;text-align:right;font-size:8.2px;font-weight:normal;color:#222;letter-spacing:0px;transform:scaleX(0.95);transform-origin:100% 0;">7</div>
<div class="t" style="left:456.30px;width:55.40px;top:341.65px;text-align:center;font-size:8.2px;font-weight:normal;color:#333;letter-spacing:0px;transform:scaleX(0.92);transform-origin:50% 0;">01/04/2025</div>
<div class="t" style="left:518.70px;width:55.10px;top:341.65px;text-align:center;font-size:8.2px;font-weight:normal;color:#333;letter-spacing:0px;transform:scaleX(0.92);transform-origin:50% 0;">07/04/2025</div>
<div class="a" style="left:211px;top:354.74px;width:369.8px;height:16.89px;background:#f8f8f8"></div>
<div class="a" style="left:592.0999999999999px;top:354.74px;width:572.10px;height:16.89px;background:#f8f8f8"></div>
<div class="a" style="left:666.3px;top:354.74px;width:50.0px;height:16.89px;background:#f8f8f8"></div>
<div class="a" style="left:841.3px;top:354.74px;width:50.0px;height:16.89px;background:#f8f8f8"></div>
<div class="a" style="left:1016.3px;top:354.74px;width:50.0px;height:16.89px;background:#f8f8f8"></div>
<div class="a" style="left:741.3px;top:354.14px;width:1px;height:17.49px;background:#d5e8d5"></div>
<div class="a" style="left:211px;top:371.03px;width:369.8px;height:1.2px;background:#e5e5e5"></div>
<div class="a" style="left:592.0999999999999px;top:371.03px;width:572.10px;height:1.2px;background:#e5e5e5"></div>
<svg style="left:213px;top:358.34px" width="9" height="10" viewBox="0 0 9 10">
<defs><linearGradient id="pp11" x1="0" y1="0" x2="1" y2="1"><stop offset="0" stop-color="#fff"/><stop offset="1" stop-color="#bdbdbd"/></linearGradient></defs>
<rect x="0.3" y="1" width="7.2" height="8.8" fill="url(#pp11)"/>
<rect x="1" y="0.2" width="5" height="1.5" fill="#f0d070"/>
<path d="M1 5.6L3.3 8.6 8.4 1.2" stroke="#d81818" stroke-width="1.5" fill="none" stroke-linejoin="round"/>
</svg>
<div class="t" style="left:230.40px;width:20.10px;top:359.14px;text-align:center;font-size:8.2px;font-weight:normal;color:#777;letter-spacing:0px;transform:scaleX(0.92);transform-origin:50% 0;">12</div>
<div style="position:absolute;left:271.6px;top:354.14px;width:126.8px;height:17.49px;overflow:hidden"><div class="t" style="left:0.00px;top:5.00px;font-size:8.2px;font-weight:normal;color:#666;letter-spacing:0px;transform:scaleX(0.915);transform-origin:0 0;">Rinterri</div></div>
<div class="t" style="left:406.50px;width:40.80px;top:359.14px;text-align:right;font-size:8.2px;font-weight:normal;color:#222;letter-spacing:0px;transform:scaleX(0.95);transform-origin:100% 0;">5</div>
<div class="t" style="left:456.30px;width:55.40px;top:359.14px;text-align:center;font-size:8.2px;font-weight:normal;color:#333;letter-spacing:0px;transform:scaleX(0.92);transform-origin:50% 0;">03/04/2025</div>
<div class="t" style="left:518.70px;width:55.10px;top:359.14px;text-align:center;font-size:8.2px;font-weight:normal;color:#333;letter-spacing:0px;transform:scaleX(0.92);transform-origin:50% 0;">07/04/2025</div>
<div class="a" style="left:211px;top:372.23px;width:369.8px;height:16.89px;background:#fff"></div>
<div class="a" style="left:592.0999999999999px;top:372.23px;width:572.10px;height:16.89px;background:#fff"></div>
<div class="a" style="left:666.3px;top:372.23px;width:50.0px;height:16.89px;background:#f7f7f7"></div>
<div class="a" style="left:841.3px;top:372.23px;width:50.0px;height:16.89px;background:#f7f7f7"></div>
<div class="a" style="left:1016.3px;top:372.23px;width:50.0px;height:16.89px;background:#f7f7f7"></div>
<div class="a" style="left:741.3px;top:371.63px;width:1px;height:17.49px;background:#d5e8d5"></div>
<div class="a" style="left:211px;top:388.52px;width:369.8px;height:1.2px;background:#e5e5e5"></div>
<div class="a" style="left:592.0999999999999px;top:388.52px;width:572.10px;height:1.2px;background:#e5e5e5"></div>
<svg style="left:213px;top:375.83px" width="9" height="10" viewBox="0 0 9 10">
<defs><linearGradient id="pp12" x1="0" y1="0" x2="1" y2="1"><stop offset="0" stop-color="#fff"/><stop offset="1" stop-color="#bdbdbd"/></linearGradient></defs>
<rect x="0.3" y="1" width="7.2" height="8.8" fill="url(#pp12)"/>
<rect x="1" y="0.2" width="5" height="1.5" fill="#f0d070"/>
<path d="M1 5.6L3.3 8.6 8.4 1.2" stroke="#d81818" stroke-width="1.5" fill="none" stroke-linejoin="round"/>
</svg>
<div class="t" style="left:230.40px;width:20.10px;top:376.63px;text-align:center;font-size:8.2px;font-weight:normal;color:#777;letter-spacing:0px;transform:scaleX(0.92);transform-origin:50% 0;">13</div>
<div style="position:absolute;left:271.6px;top:371.63px;width:126.8px;height:17.49px;overflow:hidden"><div class="t" style="left:0.00px;top:5.00px;font-size:8.2px;font-weight:normal;color:#666;letter-spacing:0px;transform:scaleX(0.915);transform-origin:0 0;">Trasporto a rifiuto</div></div>
<div class="t" style="left:406.50px;width:40.80px;top:376.63px;text-align:right;font-size:8.2px;font-weight:normal;color:#222;letter-spacing:0px;transform:scaleX(0.95);transform-origin:100% 0;">2</div>
<div class="t" style="left:456.30px;width:55.40px;top:376.63px;text-align:center;font-size:8.2px;font-weight:normal;color:#333;letter-spacing:0px;transform:scaleX(0.92);transform-origin:50% 0;">06/04/2025</div>
<div class="t" style="left:518.70px;width:55.10px;top:376.63px;text-align:center;font-size:8.2px;font-weight:normal;color:#333;letter-spacing:0px;transform:scaleX(0.92);transform-origin:50% 0;">07/04/2025</div>
<div class="a" style="left:211px;top:389.72px;width:369.8px;height:16.89px;background:#f8f8f8"></div>
<div class="a" style="left:592.0999999999999px;top:389.72px;width:572.10px;height:16.89px;background:#f8f8f8"></div>
<div class="a" style="left:666.3px;top:389.72px;width:50.0px;height:16.89px;background:#f8f8f8"></div>
<div class="a" style="left:841.3px;top:389.72px;width:50.0px;height:16.89px;background:#f8f8f8"></div>
<div class="a" style="left:1016.3px;top:389.72px;width:50.0px;height:16.89px;background:#f8f8f8"></div>
<div class="a" style="left:741.3px;top:389.12px;width:1px;height:17.49px;background:#d5e8d5"></div>
<div class="a" style="left:211px;top:406.01px;width:369.8px;height:1.2px;background:#e5e5e5"></div>
<div class="a" style="left:592.0999999999999px;top:406.01px;width:572.10px;height:1.2px;background:#e5e5e5"></div>
<svg style="left:213px;top:393.32px" width="9" height="10" viewBox="0 0 9 10">
<defs><linearGradient id="pp13" x1="0" y1="0" x2="1" y2="1"><stop offset="0" stop-color="#fff"/><stop offset="1" stop-color="#bdbdbd"/></linearGradient></defs>
<rect x="0.3" y="1" width="7.2" height="8.8" fill="url(#pp13)"/>
<rect x="1" y="0.2" width="5" height="1.5" fill="#f0d070"/>
<path d="M1 5.6L3.3 8.6 8.4 1.2" stroke="#d81818" stroke-width="1.5" fill="none" stroke-linejoin="round"/>
</svg>
<div class="t" style="left:230.40px;width:20.10px;top:394.12px;text-align:center;font-size:8.2px;font-weight:bold;color:#4a4a4a;letter-spacing:0px;transform:scaleX(0.92);transform-origin:50% 0;">14</div>
<svg style="left:254px;top:395.42px" width="6" height="6" viewBox="0 0 6 6"><path d="M0 0.5H5.4L2.7 4.8Z" fill="#6a6a6a"/></svg>
<div class="t" style="left:261.80px;top:394.12px;font-size:8.2px;font-weight:bold;color:#4a4a4a;letter-spacing:0px;transform:scaleX(0.855);transform-origin:0 0;">FONDAZIONI</div>
<div class="t" style="left:406.50px;width:40.80px;top:394.12px;text-align:right;font-size:8.2px;font-weight:bold;color:#3a3a3a;letter-spacing:0px;transform:scaleX(0.95);transform-origin:100% 0;">12</div>
<div class="t" style="left:456.30px;width:55.40px;top:394.12px;text-align:center;font-size:8.2px;font-weight:bold;color:#3a3a3a;letter-spacing:0px;transform:scaleX(0.976);transform-origin:50% 0;">08/04/2025</div>
<div class="t" style="left:518.70px;width:55.10px;top:394.12px;text-align:center;font-size:8.2px;font-weight:bold;color:#3a3a3a;letter-spacing:0px;transform:scaleX(0.976);transform-origin:50% 0;">19/04/2025</div>
<div class="a" style="left:211px;top:407.21px;width:369.8px;height:16.89px;background:#fff"></div>
<div class="a" style="left:592.0999999999999px;top:407.21px;width:572.10px;height:16.89px;background:#fff"></div>
<div class="a" style="left:666.3px;top:407.21px;width:50.0px;height:16.89px;background:#f7f7f7"></div>
<div class="a" style="left:841.3px;top:407.21px;width:50.0px;height:16.89px;background:#f7f7f7"></div>
<div class="a" style="left:1016.3px;top:407.21px;width:50.0px;height:16.89px;background:#f7f7f7"></div>
<div class="a" style="left:741.3px;top:406.61px;width:1px;height:17.49px;background:#d5e8d5"></div>
<div class="a" style="left:211px;top:423.50px;width:369.8px;height:1.2px;background:#e5e5e5"></div>
<div class="a" style="left:592.0999999999999px;top:423.50px;width:572.10px;height:1.2px;background:#e5e5e5"></div>
<svg style="left:213px;top:410.81px" width="9" height="10" viewBox="0 0 9 10">
<defs><linearGradient id="pp14" x1="0" y1="0" x2="1" y2="1"><stop offset="0" stop-color="#fff"/><stop offset="1" stop-color="#bdbdbd"/></linearGradient></defs>
<rect x="0.3" y="1" width="7.2" height="8.8" fill="url(#pp14)"/>
<rect x="1" y="0.2" width="5" height="1.5" fill="#f0d070"/>
<path d="M1 5.6L3.3 8.6 8.4 1.2" stroke="#d81818" stroke-width="1.5" fill="none" stroke-linejoin="round"/>
</svg>
<div class="t" style="left:230.40px;width:20.10px;top:411.61px;text-align:center;font-size:8.2px;font-weight:normal;color:#777;letter-spacing:0px;transform:scaleX(0.92);transform-origin:50% 0;">15</div>
<div style="position:absolute;left:271.6px;top:406.61px;width:126.8px;height:17.49px;overflow:hidden"><div class="t" style="left:0.00px;top:5.00px;font-size:8.2px;font-weight:normal;color:#666;letter-spacing:0px;transform:scaleX(0.915);transform-origin:0 0;">Casserature in legno</div></div>
<div class="t" style="left:406.50px;width:40.80px;top:411.61px;text-align:right;font-size:8.2px;font-weight:normal;color:#222;letter-spacing:0px;transform:scaleX(0.95);transform-origin:100% 0;">4</div>
<div class="t" style="left:456.30px;width:55.40px;top:411.61px;text-align:center;font-size:8.2px;font-weight:normal;color:#333;letter-spacing:0px;transform:scaleX(0.92);transform-origin:50% 0;">08/04/2025</div>
<div class="t" style="left:518.70px;width:55.10px;top:411.61px;text-align:center;font-size:8.2px;font-weight:normal;color:#333;letter-spacing:0px;transform:scaleX(0.92);transform-origin:50% 0;">11/04/2025</div>
<div class="a" style="left:211px;top:424.70px;width:369.8px;height:16.89px;background:#f8f8f8"></div>
<div class="a" style="left:592.0999999999999px;top:424.70px;width:572.10px;height:16.89px;background:#f8f8f8"></div>
<div class="a" style="left:666.3px;top:424.70px;width:50.0px;height:16.89px;background:#f8f8f8"></div>
<div class="a" style="left:841.3px;top:424.70px;width:50.0px;height:16.89px;background:#f8f8f8"></div>
<div class="a" style="left:1016.3px;top:424.70px;width:50.0px;height:16.89px;background:#f8f8f8"></div>
<div class="a" style="left:741.3px;top:424.10px;width:1px;height:17.49px;background:#d5e8d5"></div>
<div class="a" style="left:211px;top:440.99px;width:369.8px;height:1.2px;background:#e5e5e5"></div>
<div class="a" style="left:592.0999999999999px;top:440.99px;width:572.10px;height:1.2px;background:#e5e5e5"></div>
<svg style="left:213px;top:428.30px" width="9" height="10" viewBox="0 0 9 10">
<defs><linearGradient id="pp15" x1="0" y1="0" x2="1" y2="1"><stop offset="0" stop-color="#fff"/><stop offset="1" stop-color="#bdbdbd"/></linearGradient></defs>
<rect x="0.3" y="1" width="7.2" height="8.8" fill="url(#pp15)"/>
<rect x="1" y="0.2" width="5" height="1.5" fill="#f0d070"/>
<path d="M1 5.6L3.3 8.6 8.4 1.2" stroke="#d81818" stroke-width="1.5" fill="none" stroke-linejoin="round"/>
</svg>
<div class="t" style="left:230.40px;width:20.10px;top:429.10px;text-align:center;font-size:8.2px;font-weight:normal;color:#777;letter-spacing:0px;transform:scaleX(0.92);transform-origin:50% 0;">16</div>
<div style="position:absolute;left:271.6px;top:424.10px;width:126.8px;height:17.49px;overflow:hidden"><div class="t" style="left:0.00px;top:5.00px;font-size:8.2px;font-weight:normal;color:#666;letter-spacing:0px;transform:scaleX(0.915);transform-origin:0 0;">Ferro in opera</div></div>
<div class="t" style="left:406.50px;width:40.80px;top:429.10px;text-align:right;font-size:8.2px;font-weight:normal;color:#222;letter-spacing:0px;transform:scaleX(0.95);transform-origin:100% 0;">5</div>
<div class="t" style="left:456.30px;width:55.40px;top:429.10px;text-align:center;font-size:8.2px;font-weight:normal;color:#333;letter-spacing:0px;transform:scaleX(0.92);transform-origin:50% 0;">12/04/2025</div>
<div class="t" style="left:518.70px;width:55.10px;top:429.10px;text-align:center;font-size:8.2px;font-weight:normal;color:#333;letter-spacing:0px;transform:scaleX(0.92);transform-origin:50% 0;">16/04/2025</div>
<div class="a" style="left:211px;top:442.19px;width:369.8px;height:16.89px;background:#fff"></div>
<div class="a" style="left:592.0999999999999px;top:442.19px;width:572.10px;height:16.89px;background:#fff"></div>
<div class="a" style="left:666.3px;top:442.19px;width:50.0px;height:16.89px;background:#f7f7f7"></div>
<div class="a" style="left:841.3px;top:442.19px;width:50.0px;height:16.89px;background:#f7f7f7"></div>
<div class="a" style="left:1016.3px;top:442.19px;width:50.0px;height:16.89px;background:#f7f7f7"></div>
<div class="a" style="left:741.3px;top:441.59px;width:1px;height:17.49px;background:#d5e8d5"></div>
<div class="a" style="left:211px;top:458.48px;width:369.8px;height:1.2px;background:#e5e5e5"></div>
<div class="a" style="left:592.0999999999999px;top:458.48px;width:572.10px;height:1.2px;background:#e5e5e5"></div>
<svg style="left:213px;top:445.79px" width="9" height="10" viewBox="0 0 9 10">
<defs><linearGradient id="pp16" x1="0" y1="0" x2="1" y2="1"><stop offset="0" stop-color="#fff"/><stop offset="1" stop-color="#bdbdbd"/></linearGradient></defs>
<rect x="0.3" y="1" width="7.2" height="8.8" fill="url(#pp16)"/>
<rect x="1" y="0.2" width="5" height="1.5" fill="#f0d070"/>
<path d="M1 5.6L3.3 8.6 8.4 1.2" stroke="#d81818" stroke-width="1.5" fill="none" stroke-linejoin="round"/>
</svg>
<div class="t" style="left:230.40px;width:20.10px;top:446.59px;text-align:center;font-size:8.2px;font-weight:normal;color:#777;letter-spacing:0px;transform:scaleX(0.92);transform-origin:50% 0;">17</div>
<div style="position:absolute;left:271.6px;top:441.59px;width:126.8px;height:17.49px;overflow:hidden"><div class="t" style="left:0.00px;top:5.00px;font-size:8.2px;font-weight:normal;color:#666;letter-spacing:0px;transform:scaleX(0.915);transform-origin:0 0;">Fondazioni</div></div>
<div class="t" style="left:406.50px;width:40.80px;top:446.59px;text-align:right;font-size:8.2px;font-weight:normal;color:#222;letter-spacing:0px;transform:scaleX(0.95);transform-origin:100% 0;">2</div>
<div class="t" style="left:456.30px;width:55.40px;top:446.59px;text-align:center;font-size:8.2px;font-weight:normal;color:#333;letter-spacing:0px;transform:scaleX(0.92);transform-origin:50% 0;">15/04/2025</div>
<div class="t" style="left:518.70px;width:55.10px;top:446.59px;text-align:center;font-size:8.2px;font-weight:normal;color:#333;letter-spacing:0px;transform:scaleX(0.92);transform-origin:50% 0;">16/04/2025</div>
<div class="a" style="left:211px;top:459.68px;width:369.8px;height:16.89px;background:#f8f8f8"></div>
<div class="a" style="left:592.0999999999999px;top:459.68px;width:572.10px;height:16.89px;background:#f8f8f8"></div>
<div class="a" style="left:666.3px;top:459.68px;width:50.0px;height:16.89px;background:#f8f8f8"></div>
<div class="a" style="left:841.3px;top:459.68px;width:50.0px;height:16.89px;background:#f8f8f8"></div>
<div class="a" style="left:1016.3px;top:459.68px;width:50.0px;height:16.89px;background:#f8f8f8"></div>
<div class="a" style="left:741.3px;top:459.08px;width:1px;height:17.49px;background:#d5e8d5"></div>
<div class="a" style="left:211px;top:475.97px;width:369.8px;height:1.2px;background:#e5e5e5"></div>
<div class="a" style="left:592.0999999999999px;top:475.97px;width:572.10px;height:1.2px;background:#e5e5e5"></div>
<svg style="left:213px;top:463.28px" width="9" height="10" viewBox="0 0 9 10">
<defs><linearGradient id="pp17" x1="0" y1="0" x2="1" y2="1"><stop offset="0" stop-color="#fff"/><stop offset="1" stop-color="#bdbdbd"/></linearGradient></defs>
<rect x="0.3" y="1" width="7.2" height="8.8" fill="url(#pp17)"/>
<rect x="1" y="0.2" width="5" height="1.5" fill="#f0d070"/>
<path d="M1 5.6L3.3 8.6 8.4 1.2" stroke="#d81818" stroke-width="1.5" fill="none" stroke-linejoin="round"/>
</svg>
<div class="t" style="left:230.40px;width:20.10px;top:464.08px;text-align:center;font-size:8.2px;font-weight:normal;color:#777;letter-spacing:0px;transform:scaleX(0.92);transform-origin:50% 0;">18</div>
<div style="position:absolute;left:271.6px;top:459.08px;width:126.8px;height:17.49px;overflow:hidden"><div class="t" style="left:0.00px;top:5.00px;font-size:8.2px;font-weight:normal;color:#666;letter-spacing:0px;transform:scaleX(0.915);transform-origin:0 0;">Getto di calcestruzzo</div></div>
<div class="t" style="left:406.50px;width:40.80px;top:464.08px;text-align:right;font-size:8.2px;font-weight:normal;color:#222;letter-spacing:0px;transform:scaleX(0.95);transform-origin:100% 0;">3</div>
<div class="t" style="left:456.30px;width:55.40px;top:464.08px;text-align:center;font-size:8.2px;font-weight:normal;color:#333;letter-spacing:0px;transform:scaleX(0.92);transform-origin:50% 0;">16/04/2025</div>
<div class="t" style="left:518.70px;width:55.10px;top:464.08px;text-align:center;font-size:8.2px;font-weight:normal;color:#333;letter-spacing:0px;transform:scaleX(0.92);transform-origin:50% 0;">18/04/2025</div>
<div class="a" style="left:211px;top:477.17px;width:369.8px;height:16.89px;background:#fff"></div>
<div class="a" style="left:592.0999999999999px;top:477.17px;width:572.10px;height:16.89px;background:#fff"></div>
<div class="a" style="left:666.3px;top:477.17px;width:50.0px;height:16.89px;background:#f7f7f7"></div>
<div class="a" style="left:841.3px;top:477.17px;width:50.0px;height:16.89px;background:#f7f7f7"></div>
<div class="a" style="left:1016.3px;top:477.17px;width:50.0px;height:16.89px;background:#f7f7f7"></div>
<div class="a" style="left:741.3px;top:476.57px;width:1px;height:17.49px;background:#d5e8d5"></div>
<div class="a" style="left:211px;top:493.46px;width:369.8px;height:1.2px;background:#e5e5e5"></div>
<div class="a" style="left:592.0999999999999px;top:493.46px;width:572.10px;height:1.2px;background:#e5e5e5"></div>
<svg style="left:213px;top:480.77px" width="9" height="10" viewBox="0 0 9 10">
<defs><linearGradient id="pp18" x1="0" y1="0" x2="1" y2="1"><stop offset="0" stop-color="#fff"/><stop offset="1" stop-color="#bdbdbd"/></linearGradient></defs>
<rect x="0.3" y="1" width="7.2" height="8.8" fill="url(#pp18)"/>
<rect x="1" y="0.2" width="5" height="1.5" fill="#f0d070"/>
<path d="M1 5.6L3.3 8.6 8.4 1.2" stroke="#d81818" stroke-width="1.5" fill="none" stroke-linejoin="round"/>
</svg>
<div class="t" style="left:230.40px;width:20.10px;top:481.57px;text-align:center;font-size:8.2px;font-weight:normal;color:#777;letter-spacing:0px;transform:scaleX(0.92);transform-origin:50% 0;">19</div>
<div style="position:absolute;left:271.6px;top:476.57px;width:126.8px;height:17.49px;overflow:hidden"><div class="t" style="left:0.00px;top:5.00px;font-size:8.2px;font-weight:normal;color:#666;letter-spacing:0px;transform:scaleX(0.915);transform-origin:0 0;">Esecuzione pareti di contenimento</div></div>
<div class="t" style="left:406.50px;width:40.80px;top:481.57px;text-align:right;font-size:8.2px;font-weight:normal;color:#222;letter-spacing:0px;transform:scaleX(0.95);transform-origin:100% 0;">1</div>
<div class="t" style="left:456.30px;width:55.40px;top:481.57px;text-align:center;font-size:8.2px;font-weight:normal;color:#333;letter-spacing:0px;transform:scaleX(0.92);transform-origin:50% 0;">19/04/2025</div>
<div class="t" style="left:518.70px;width:55.10px;top:481.57px;text-align:center;font-size:8.2px;font-weight:normal;color:#333;letter-spacing:0px;transform:scaleX(0.92);transform-origin:50% 0;">19/04/2025</div>
<div class="a" style="left:211px;top:494.66px;width:369.8px;height:16.89px;background:#f8f8f8"></div>
<div class="a" style="left:592.0999999999999px;top:494.66px;width:572.10px;height:16.89px;background:#f8f8f8"></div>
<div class="a" style="left:666.3px;top:494.66px;width:50.0px;height:16.89px;background:#f8f8f8"></div>
<div class="a" style="left:841.3px;top:494.66px;width:50.0px;height:16.89px;background:#f8f8f8"></div>
<div class="a" style="left:1016.3px;top:494.66px;width:50.0px;height:16.89px;background:#f8f8f8"></div>
<div class="a" style="left:741.3px;top:494.06px;width:1px;height:17.49px;background:#d5e8d5"></div>
<div class="a" style="left:211px;top:510.95px;width:369.8px;height:1.2px;background:#e5e5e5"></div>
<div class="a" style="left:592.0999999999999px;top:510.95px;width:572.10px;height:1.2px;background:#e5e5e5"></div>
<svg style="left:213px;top:498.26px" width="9" height="10" viewBox="0 0 9 10">
<defs><linearGradient id="pp19" x1="0" y1="0" x2="1" y2="1"><stop offset="0" stop-color="#fff"/><stop offset="1" stop-color="#bdbdbd"/></linearGradient></defs>
<rect x="0.3" y="1" width="7.2" height="8.8" fill="url(#pp19)"/>
<rect x="1" y="0.2" width="5" height="1.5" fill="#f0d070"/>
<path d="M1 5.6L3.3 8.6 8.4 1.2" stroke="#d81818" stroke-width="1.5" fill="none" stroke-linejoin="round"/>
</svg>
<div class="t" style="left:230.40px;width:20.10px;top:499.06px;text-align:center;font-size:8.2px;font-weight:bold;color:#4a4a4a;letter-spacing:0px;transform:scaleX(0.92);transform-origin:50% 0;">20</div>
<svg style="left:254px;top:500.36px" width="6" height="6" viewBox="0 0 6 6"><path d="M0.5 0L4.8 2.7 0.5 5.4Z" fill="#6a6a6a"/></svg>
<div class="t" style="left:261.80px;top:499.06px;font-size:8.2px;font-weight:bold;color:#4a4a4a;letter-spacing:0px;transform:scaleX(0.855);transform-origin:0 0;">STRUTTURE IN ELEVAZIONE</div>
<div class="t" style="left:406.50px;width:40.80px;top:499.06px;text-align:right;font-size:8.2px;font-weight:bold;color:#3a3a3a;letter-spacing:0px;transform:scaleX(0.95);transform-origin:100% 0;">9</div>
<div class="t" style="left:456.30px;width:55.40px;top:499.06px;text-align:center;font-size:8.2px;font-weight:bold;color:#3a3a3a;letter-spacing:0px;transform:scaleX(0.976);transform-origin:50% 0;">20/04/2025</div>
<div class="t" style="left:518.70px;width:55.10px;top:499.06px;text-align:center;font-size:8.2px;font-weight:bold;color:#3a3a3a;letter-spacing:0px;transform:scaleX(0.976);transform-origin:50% 0;">28/04/2025</div>
<div class="a" style="left:211px;top:512.15px;width:369.8px;height:16.89px;background:#fff"></div>
<div class="a" style="left:592.0999999999999px;top:512.15px;width:572.10px;height:16.89px;background:#fff"></div>
<div class="a" style="left:666.3px;top:512.15px;width:50.0px;height:16.89px;background:#f7f7f7"></div>
<div class="a" style="left:841.3px;top:512.15px;width:50.0px;height:16.89px;background:#f7f7f7"></div>
<div class="a" style="left:1016.3px;top:512.15px;width:50.0px;height:16.89px;background:#f7f7f7"></div>
<div class="a" style="left:741.3px;top:511.55px;width:1px;height:17.49px;background:#d5e8d5"></div>
<div class="a" style="left:211px;top:528.44px;width:369.8px;height:1.2px;background:#e5e5e5"></div>
<div class="a" style="left:592.0999999999999px;top:528.44px;width:572.10px;height:1.2px;background:#e5e5e5"></div>
<svg style="left:213px;top:515.75px" width="9" height="10" viewBox="0 0 9 10">
<defs><linearGradient id="pp20" x1="0" y1="0" x2="1" y2="1"><stop offset="0" stop-color="#fff"/><stop offset="1" stop-color="#bdbdbd"/></linearGradient></defs>
<rect x="0.3" y="1" width="7.2" height="8.8" fill="url(#pp20)"/>
<rect x="1" y="0.2" width="5" height="1.5" fill="#f0d070"/>
<path d="M1 5.6L3.3 8.6 8.4 1.2" stroke="#d81818" stroke-width="1.5" fill="none" stroke-linejoin="round"/>
</svg>
<div class="t" style="left:230.40px;width:20.10px;top:516.55px;text-align:center;font-size:8.2px;font-weight:bold;color:#4a4a4a;letter-spacing:0px;transform:scaleX(0.92);transform-origin:50% 0;">30</div>
<svg style="left:254px;top:517.85px" width="6" height="6" viewBox="0 0 6 6"><path d="M0.5 0L4.8 2.7 0.5 5.4Z" fill="#6a6a6a"/></svg>
<div class="t" style="left:261.80px;top:516.55px;font-size:8.2px;font-weight:bold;color:#4a4a4a;letter-spacing:0px;transform:scaleX(0.855);transform-origin:0 0;">TETTI E COPERTURE</div>
<div class="t" style="left:406.50px;width:40.80px;top:516.55px;text-align:right;font-size:8.2px;font-weight:bold;color:#3a3a3a;letter-spacing:0px;transform:scaleX(0.95);transform-origin:100% 0;">2</div>
<div class="t" style="left:456.30px;width:55.40px;top:516.55px;text-align:center;font-size:8.2px;font-weight:bold;color:#3a3a3a;letter-spacing:0px;transform:scaleX(0.976);transform-origin:50% 0;">29/04/2025</div>
<div class="t" style="left:518.70px;width:55.10px;top:516.55px;text-align:center;font-size:8.2px;font-weight:bold;color:#3a3a3a;letter-spacing:0px;transform:scaleX(0.976);transform-origin:50% 0;">30/04/2025</div>
<div class="a" style="left:211px;top:529.64px;width:369.8px;height:16.89px;background:#f8f8f8"></div>
<div class="a" style="left:592.0999999999999px;top:529.64px;width:572.10px;height:16.89px;background:#f8f8f8"></div>
<div class="a" style="left:666.3px;top:529.64px;width:50.0px;height:16.89px;background:#f8f8f8"></div>
<div class="a" style="left:841.3px;top:529.64px;width:50.0px;height:16.89px;background:#f8f8f8"></div>
<div class="a" style="left:1016.3px;top:529.64px;width:50.0px;height:16.89px;background:#f8f8f8"></div>
<div class="a" style="left:741.3px;top:529.04px;width:1px;height:17.49px;background:#d5e8d5"></div>
<div class="a" style="left:211px;top:545.93px;width:369.8px;height:1.2px;background:#e5e5e5"></div>
<div class="a" style="left:592.0999999999999px;top:545.93px;width:572.10px;height:1.2px;background:#e5e5e5"></div>
<svg style="left:213px;top:533.24px" width="9" height="10" viewBox="0 0 9 10">
<defs><linearGradient id="pp21" x1="0" y1="0" x2="1" y2="1"><stop offset="0" stop-color="#fff"/><stop offset="1" stop-color="#bdbdbd"/></linearGradient></defs>
<rect x="0.3" y="1" width="7.2" height="8.8" fill="url(#pp21)"/>
<rect x="1" y="0.2" width="5" height="1.5" fill="#f0d070"/>
<path d="M1 5.6L3.3 8.6 8.4 1.2" stroke="#d81818" stroke-width="1.5" fill="none" stroke-linejoin="round"/>
</svg>
<div class="t" style="left:230.40px;width:20.10px;top:534.04px;text-align:center;font-size:8.2px;font-weight:bold;color:#4a4a4a;letter-spacing:0px;transform:scaleX(0.92);transform-origin:50% 0;">33</div>
<svg style="left:254px;top:535.34px" width="6" height="6" viewBox="0 0 6 6"><path d="M0.5 0L4.8 2.7 0.5 5.4Z" fill="#6a6a6a"/></svg>
<div class="t" style="left:261.80px;top:534.04px;font-size:8.2px;font-weight:bold;color:#4a4a4a;letter-spacing:0px;transform:scaleX(0.855);transform-origin:0 0;">IMPIANTI INTERNI</div>
<div class="t" style="left:406.50px;width:40.80px;top:534.04px;text-align:right;font-size:8.2px;font-weight:bold;color:#3a3a3a;letter-spacing:0px;transform:scaleX(0.95);transform-origin:100% 0;">4</div>
<div class="t" style="left:456.30px;width:55.40px;top:534.04px;text-align:center;font-size:8.2px;font-weight:bold;color:#3a3a3a;letter-spacing:0px;transform:scaleX(0.976);transform-origin:50% 0;">01/05/2025</div>
<div class="t" style="left:518.70px;width:55.10px;top:534.04px;text-align:center;font-size:8.2px;font-weight:bold;color:#3a3a3a;letter-spacing:0px;transform:scaleX(0.976);transform-origin:50% 0;">04/05/2025</div>
<div class="a" style="left:211px;top:547.13px;width:369.8px;height:16.89px;background:#fff"></div>
<div class="a" style="left:592.0999999999999px;top:547.13px;width:572.10px;height:16.89px;background:#fff"></div>
<div class="a" style="left:666.3px;top:547.13px;width:50.0px;height:16.89px;background:#f7f7f7"></div>
<div class="a" style="left:841.3px;top:547.13px;width:50.0px;height:16.89px;background:#f7f7f7"></div>
<div class="a" style="left:1016.3px;top:547.13px;width:50.0px;height:16.89px;background:#f7f7f7"></div>
<div class="a" style="left:741.3px;top:546.53px;width:1px;height:17.49px;background:#d5e8d5"></div>
<div class="a" style="left:211px;top:563.42px;width:369.8px;height:1.2px;background:#e5e5e5"></div>
<div class="a" style="left:592.0999999999999px;top:563.42px;width:572.10px;height:1.2px;background:#e5e5e5"></div>
<svg style="left:213px;top:550.73px" width="9" height="10" viewBox="0 0 9 10">
<defs><linearGradient id="pp22" x1="0" y1="0" x2="1" y2="1"><stop offset="0" stop-color="#fff"/><stop offset="1" stop-color="#bdbdbd"/></linearGradient></defs>
<rect x="0.3" y="1" width="7.2" height="8.8" fill="url(#pp22)"/>
<rect x="1" y="0.2" width="5" height="1.5" fill="#f0d070"/>
<path d="M1 5.6L3.3 8.6 8.4 1.2" stroke="#d81818" stroke-width="1.5" fill="none" stroke-linejoin="round"/>
</svg>
<div class="t" style="left:230.40px;width:20.10px;top:551.53px;text-align:center;font-size:8.2px;font-weight:bold;color:#4a4a4a;letter-spacing:0px;transform:scaleX(0.92);transform-origin:50% 0;">38</div>
<svg style="left:254px;top:552.83px" width="6" height="6" viewBox="0 0 6 6"><path d="M0.5 0L4.8 2.7 0.5 5.4Z" fill="#6a6a6a"/></svg>
<div class="t" style="left:261.80px;top:551.53px;font-size:8.2px;font-weight:bold;color:#4a4a4a;letter-spacing:0px;transform:scaleX(0.855);transform-origin:0 0;">FINITURE ESTERNE</div>
<div class="t" style="left:406.50px;width:40.80px;top:551.53px;text-align:right;font-size:8.2px;font-weight:bold;color:#3a3a3a;letter-spacing:0px;transform:scaleX(0.95);transform-origin:100% 0;">4</div>
<div class="t" style="left:456.30px;width:55.40px;top:551.53px;text-align:center;font-size:8.2px;font-weight:bold;color:#3a3a3a;letter-spacing:0px;transform:scaleX(0.976);transform-origin:50% 0;">05/05/2025</div>
<div class="t" style="left:518.70px;width:55.10px;top:551.53px;text-align:center;font-size:8.2px;font-weight:bold;color:#3a3a3a;letter-spacing:0px;transform:scaleX(0.976);transform-origin:50% 0;">08/05/2025</div>
<div class="a" style="left:211px;top:564.62px;width:369.8px;height:16.89px;background:#f8f8f8"></div>
<div class="a" style="left:592.0999999999999px;top:564.62px;width:572.10px;height:16.89px;background:#f8f8f8"></div>
<div class="a" style="left:666.3px;top:564.62px;width:50.0px;height:16.89px;background:#f8f8f8"></div>
<div class="a" style="left:841.3px;top:564.62px;width:50.0px;height:16.89px;background:#f8f8f8"></div>
<div class="a" style="left:1016.3px;top:564.62px;width:50.0px;height:16.89px;background:#f8f8f8"></div>
<div class="a" style="left:741.3px;top:564.02px;width:1px;height:17.49px;background:#d5e8d5"></div>
<div class="a" style="left:211px;top:580.91px;width:369.8px;height:1.2px;background:#e5e5e5"></div>
<div class="a" style="left:592.0999999999999px;top:580.91px;width:572.10px;height:1.2px;background:#e5e5e5"></div>
<svg style="left:213px;top:568.22px" width="9" height="10" viewBox="0 0 9 10">
<defs><linearGradient id="pp23" x1="0" y1="0" x2="1" y2="1"><stop offset="0" stop-color="#fff"/><stop offset="1" stop-color="#bdbdbd"/></linearGradient></defs>
<rect x="0.3" y="1" width="7.2" height="8.8" fill="url(#pp23)"/>
<rect x="1" y="0.2" width="5" height="1.5" fill="#f0d070"/>
<path d="M1 5.6L3.3 8.6 8.4 1.2" stroke="#d81818" stroke-width="1.5" fill="none" stroke-linejoin="round"/>
</svg>
<div class="t" style="left:230.40px;width:20.10px;top:569.02px;text-align:center;font-size:8.2px;font-weight:bold;color:#4a4a4a;letter-spacing:0px;transform:scaleX(0.92);transform-origin:50% 0;">43</div>
<svg style="left:254px;top:570.32px" width="6" height="6" viewBox="0 0 6 6"><path d="M0.5 0L4.8 2.7 0.5 5.4Z" fill="#6a6a6a"/></svg>
<div class="t" style="left:261.80px;top:569.02px;font-size:8.2px;font-weight:bold;color:#4a4a4a;letter-spacing:0px;transform:scaleX(0.855);transform-origin:0 0;">FINITURE INTERNE</div>
<div class="t" style="left:406.50px;width:40.80px;top:569.02px;text-align:right;font-size:8.2px;font-weight:bold;color:#3a3a3a;letter-spacing:0px;transform:scaleX(0.95);transform-origin:100% 0;">4</div>
<div class="t" style="left:456.30px;width:55.40px;top:569.02px;text-align:center;font-size:8.2px;font-weight:bold;color:#3a3a3a;letter-spacing:0px;transform:scaleX(0.976);transform-origin:50% 0;">09/05/2025</div>
<div class="t" style="left:518.70px;width:55.10px;top:569.02px;text-align:center;font-size:8.2px;font-weight:bold;color:#3a3a3a;letter-spacing:0px;transform:scaleX(0.976);transform-origin:50% 0;">12/05/2025</div>
<div class="a" style="left:211px;top:582.11px;width:369.8px;height:16.89px;background:#fff"></div>
<div class="a" style="left:592.0999999999999px;top:582.11px;width:572.10px;height:16.89px;background:#fff"></div>
<div class="a" style="left:666.3px;top:582.11px;width:50.0px;height:16.89px;background:#f7f7f7"></div>
<div class="a" style="left:841.3px;top:582.11px;width:50.0px;height:16.89px;background:#f7f7f7"></div>
<div class="a" style="left:1016.3px;top:582.11px;width:50.0px;height:16.89px;background:#f7f7f7"></div>
<div class="a" style="left:741.3px;top:581.51px;width:1px;height:17.49px;background:#d5e8d5"></div>
<div class="a" style="left:211px;top:598.40px;width:369.8px;height:1.2px;background:#e5e5e5"></div>
<div class="a" style="left:592.0999999999999px;top:598.40px;width:572.10px;height:1.2px;background:#e5e5e5"></div>
<svg style="left:213px;top:585.71px" width="9" height="10" viewBox="0 0 9 10">
<defs><linearGradient id="pp24" x1="0" y1="0" x2="1" y2="1"><stop offset="0" stop-color="#fff"/><stop offset="1" stop-color="#bdbdbd"/></linearGradient></defs>
<rect x="0.3" y="1" width="7.2" height="8.8" fill="url(#pp24)"/>
<rect x="1" y="0.2" width="5" height="1.5" fill="#f0d070"/>
<path d="M1 5.6L3.3 8.6 8.4 1.2" stroke="#d81818" stroke-width="1.5" fill="none" stroke-linejoin="round"/>
</svg>
<div class="t" style="left:230.40px;width:20.10px;top:586.51px;text-align:center;font-size:8.2px;font-weight:bold;color:#4a4a4a;letter-spacing:0px;transform:scaleX(0.92);transform-origin:50% 0;">48</div>
<svg style="left:254px;top:587.81px" width="6" height="6" viewBox="0 0 6 6"><path d="M0.5 0L4.8 2.7 0.5 5.4Z" fill="#6a6a6a"/></svg>
<div class="t" style="left:261.80px;top:586.51px;font-size:8.2px;font-weight:bold;color:#4a4a4a;letter-spacing:0px;transform:scaleX(0.855);transform-origin:0 0;">RECINZIONE E OPERE IN FERRO</div>
<div class="t" style="left:406.50px;width:40.80px;top:586.51px;text-align:right;font-size:8.2px;font-weight:bold;color:#3a3a3a;letter-spacing:0px;transform:scaleX(0.95);transform-origin:100% 0;">2</div>
<div class="t" style="left:456.30px;width:55.40px;top:586.51px;text-align:center;font-size:8.2px;font-weight:bold;color:#3a3a3a;letter-spacing:0px;transform:scaleX(0.976);transform-origin:50% 0;">13/05/2025</div>
<div class="t" style="left:518.70px;width:55.10px;top:586.51px;text-align:center;font-size:8.2px;font-weight:bold;color:#3a3a3a;letter-spacing:0px;transform:scaleX(0.976);transform-origin:50% 0;">14/05/2025</div>
<div class="a" style="left:229.9px;top:123.5px;width:1px;height:476.5px;background:#e2e2e2"></div>
<div class="a" style="left:250.0px;top:123.5px;width:1px;height:476.5px;background:#e2e2e2"></div>
<div class="a" style="left:406.0px;top:123.5px;width:1px;height:476.5px;background:#e2e2e2"></div>
<div class="a" style="left:455.8px;top:123.5px;width:1px;height:476.5px;background:#e2e2e2"></div>
<div class="a" style="left:518.2px;top:123.5px;width:1px;height:476.5px;background:#e2e2e2"></div>
<div class="a" style="left:580.3px;top:123.5px;width:1px;height:476.5px;background:#e2e2e2"></div>
<div class="a" style="left:581.2px;top:123.5px;width:1.6px;height:476.5px;background:#d8d8d8"></div>
<div class="a" style="left:590.8px;top:123.5px;width:1px;height:476.5px;background:#a8a8a8"></div>
<div class="a" style="left:211px;top:161px;width:953px;height:1.3px;background:#cfcfcf"></div>
<div class="a" style="left:592.0999999999999px;top:161.75px;width:572.10px;height:438.25px;overflow:hidden">
<div class="a" style="left:-275.80px;top:2.20px;width:350.0px;height:10px;background:linear-gradient(#444 0,#888 10%,#c0c0c0 20%,#6a6a6a 34%,#111 52%,#000 62%,#000)"></div>
<svg style="left:-281.10px;top:2.00px" width="10.6" height="14" viewBox="0 0 10.6 14">
<defs><linearGradient id="cg0-275" x1="0" y1="0" x2="0" y2="1"><stop offset="0" stop-color="#444"/><stop offset="0.1" stop-color="#d0d0d0"/><stop offset="0.3" stop-color="#777"/><stop offset="0.55" stop-color="#111"/><stop offset="1" stop-color="#000"/></linearGradient></defs>
<path d="M0.4 0.4H10.2V10.2L5.3 13.7 0.4 10.2Z" fill="url(#cg0-275)" stroke="#1a1a1a" stroke-width="0.7"/></svg>
<svg style="left:68.90px;top:2.00px" width="10.6" height="14" viewBox="0 0 10.6 14">
<defs><linearGradient id="cg074" x1="0" y1="0" x2="0" y2="1"><stop offset="0" stop-color="#444"/><stop offset="0.1" stop-color="#d0d0d0"/><stop offset="0.3" stop-color="#777"/><stop offset="0.55" stop-color="#111"/><stop offset="1" stop-color="#000"/></linearGradient></defs>
<path d="M0.4 0.4H10.2V10.2L5.3 13.7 0.4 10.2Z" fill="url(#cg074)" stroke="#1a1a1a" stroke-width="0.7"/></svg>
<div class="a" style="left:-100.80px;top:55.27px;width:75.0px;height:12.8px;background:#4169e1;border-radius:2px"></div>
<div class="t" style="left:-14.80px;top:57.47px;font-size:8.5px;font-weight:normal;color:#222;letter-spacing:0px;transform:scaleX(0.795);transform-origin:0 0;">IMPREDIL S.p.A.</div>
<div class="a" style="left:-25.80px;top:72.76px;width:50.0px;height:12.8px;background:#4169e1;border-radius:2px"></div>
<div class="t" style="left:35.20px;top:74.96px;font-size:8.5px;font-weight:normal;color:#222;letter-spacing:0px;transform:scaleX(0.795);transform-origin:0 0;">IMPREDIL S.p.A.</div>
<div class="a" style="left:24.20px;top:90.25px;width:25.0px;height:12.8px;background:#4169e1;border-radius:2px"></div>
<div class="t" style="left:60.20px;top:92.45px;font-size:8.5px;font-weight:normal;color:#222;letter-spacing:0px;transform:scaleX(0.795);transform-origin:0 0;">IMPREDIL S.p.A.</div>
<div class="a" style="left:49.20px;top:107.74px;width:25.0px;height:12.8px;background:#4169e1;border-radius:2px"></div>
<div class="t" style="left:85.20px;top:109.94px;font-size:8.5px;font-weight:normal;color:#222;letter-spacing:0px;transform:scaleX(0.795);transform-origin:0 0;">IMPREDIL S.p.A.</div>
<div class="a" style="left:74.20px;top:124.63px;width:250.0px;height:10px;background:linear-gradient(#444 0,#888 10%,#c0c0c0 20%,#6a6a6a 34%,#111 52%,#000 62%,#000)"></div>
<svg style="left:68.90px;top:124.43px" width="10.6" height="14" viewBox="0 0 10.6 14">
<defs><linearGradient id="cg774" x1="0" y1="0" x2="0" y2="1"><stop offset="0" stop-color="#444"/><stop offset="0.1" stop-color="#d0d0d0"/><stop offset="0.3" stop-color="#777"/><stop offset="0.55" stop-color="#111"/><stop offset="1" stop-color="#000"/></linearGradient></defs>
<path d="M0.4 0.4H10.2V10.2L5.3 13.7 0.4 10.2Z" fill="url(#cg774)" stroke="#1a1a1a" stroke-width="0.7"/></svg>
<svg style="left:318.90px;top:124.43px" width="10.6" height="14" viewBox="0 0 10.6 14">
<defs><linearGradient id="cg7324" x1="0" y1="0" x2="0" y2="1"><stop offset="0" stop-color="#444"/><stop offset="0.1" stop-color="#d0d0d0"/><stop offset="0.3" stop-color="#777"/><stop offset="0.55" stop-color="#111"/><stop offset="1" stop-color="#000"/></linearGradient></defs>
<path d="M0.4 0.4H10.2V10.2L5.3 13.7 0.4 10.2Z" fill="url(#cg7324)" stroke="#1a1a1a" stroke-width="0.7"/></svg>
<div class="a" style="left:74.20px;top:142.72px;width:250.0px;height:12.8px;background:#ff0000;border-radius:2px"></div>
<div class="t" style="left:335.20px;top:144.92px;font-size:8.5px;font-weight:normal;color:#222;letter-spacing:0px;transform:scaleX(0.795);transform-origin:0 0;">IMPRESUD</div>
<div class="a" style="left:149.20px;top:160.21px;width:175.0px;height:12.8px;background:#228b22;border-radius:2px"></div>
<div class="t" style="left:335.20px;top:162.41px;font-size:8.5px;font-weight:normal;color:#222;letter-spacing:0px;transform:scaleX(0.795);transform-origin:0 0;">IMPRESUD</div>
<div class="a" style="left:149.20px;top:177.70px;width:175.0px;height:12.8px;background:#ff0000;border-radius:2px"></div>
<div class="t" style="left:335.20px;top:179.90px;font-size:8.5px;font-weight:normal;color:#222;letter-spacing:0px;transform:scaleX(0.795);transform-origin:0 0;">IMPRESUD</div>
<div class="a" style="left:199.20px;top:195.19px;width:125.0px;height:12.8px;background:#ff0000;border-radius:2px"></div>
<div class="t" style="left:335.20px;top:197.39px;font-size:8.5px;font-weight:normal;color:#222;letter-spacing:0px;transform:scaleX(0.795);transform-origin:0 0;">IMPRESUD</div>
<div class="a" style="left:274.20px;top:212.68px;width:50.0px;height:12.8px;background:#4169e1;border-radius:2px"></div>
<div class="t" style="left:335.20px;top:214.88px;font-size:8.5px;font-weight:normal;color:#222;letter-spacing:0px;transform:scaleX(0.795);transform-origin:0 0;">IMPRESUD</div>
<div class="a" style="left:324.20px;top:229.57px;width:300.0px;height:10px;background:linear-gradient(#444 0,#888 10%,#c0c0c0 20%,#6a6a6a 34%,#111 52%,#000 62%,#000)"></div>
<svg style="left:318.90px;top:229.37px" width="10.6" height="14" viewBox="0 0 10.6 14">
<defs><linearGradient id="cg13324" x1="0" y1="0" x2="0" y2="1"><stop offset="0" stop-color="#444"/><stop offset="0.1" stop-color="#d0d0d0"/><stop offset="0.3" stop-color="#777"/><stop offset="0.55" stop-color="#111"/><stop offset="1" stop-color="#000"/></linearGradient></defs>
<path d="M0.4 0.4H10.2V10.2L5.3 13.7 0.4 10.2Z" fill="url(#cg13324)" stroke="#1a1a1a" stroke-width="0.7"/></svg>
<svg style="left:618.90px;top:229.37px" width="10.6" height="14" viewBox="0 0 10.6 14">
<defs><linearGradient id="cg13624" x1="0" y1="0" x2="0" y2="1"><stop offset="0" stop-color="#444"/><stop offset="0.1" stop-color="#d0d0d0"/><stop offset="0.3" stop-color="#777"/><stop offset="0.55" stop-color="#111"/><stop offset="1" stop-color="#000"/></linearGradient></defs>
<path d="M0.4 0.4H10.2V10.2L5.3 13.7 0.4 10.2Z" fill="url(#cg13624)" stroke="#1a1a1a" stroke-width="0.7"/></svg>
<div class="a" style="left:324.20px;top:247.66px;width:100.0px;height:12.8px;background:#ff0000;border-radius:2px"></div>
<div class="t" style="left:435.20px;top:249.86px;font-size:8.5px;font-weight:normal;color:#222;letter-spacing:0px;transform:scaleX(0.795);transform-origin:0 0;">IMPREDIL S.p.A.</div>
<div class="a" style="left:424.20px;top:265.15px;width:125.0px;height:12.8px;background:#ff0000;border-radius:2px"></div>
<div class="t" style="left:560.20px;top:267.35px;font-size:8.5px;font-weight:normal;color:#222;letter-spacing:0px;transform:scaleX(0.795);transform-origin:0 0;">IMPREDIL S.p.A.</div>
<div class="a" style="left:499.20px;top:282.64px;width:50.0px;height:12.8px;background:#ff0000;border-radius:2px"></div>
<div class="t" style="left:560.20px;top:284.84px;font-size:8.5px;font-weight:normal;color:#222;letter-spacing:0px;transform:scaleX(0.795);transform-origin:0 0;">IMPREDIL S.p.A.</div>
<div class="a" style="left:524.20px;top:300.13px;width:75.0px;height:12.8px;background:#ff0000;border-radius:2px"></div>
<div class="t" style="left:610.20px;top:302.33px;font-size:8.5px;font-weight:normal;color:#222;letter-spacing:0px;transform:scaleX(0.795);transform-origin:0 0;">IMPREDIL S.p.A.</div>
</div>
<svg style="left:583.5px;top:165.5px" width="6" height="5" viewBox="0 0 6 5"><path d="M0 4.3L3 0.3 6 4.3Z" fill="#8a8a8a"/></svg>
<div class="a" style="left:584px;top:173.5px;width:5px;height:430px;background:#8a8a8a;border-radius:2.5px"></div>
<div class="a" style="left:5px;top:0;width:1190px;height:1.2px;background:#2d4464"></div>
<div class="a" style="left:1193.8px;top:0;width:1.5px;height:600px;background:#4a5466"></div>
<div class="a" style="left:5px;top:598.8px;width:1190px;height:1.2px;background:#2d4464"></div>
</body></html>
